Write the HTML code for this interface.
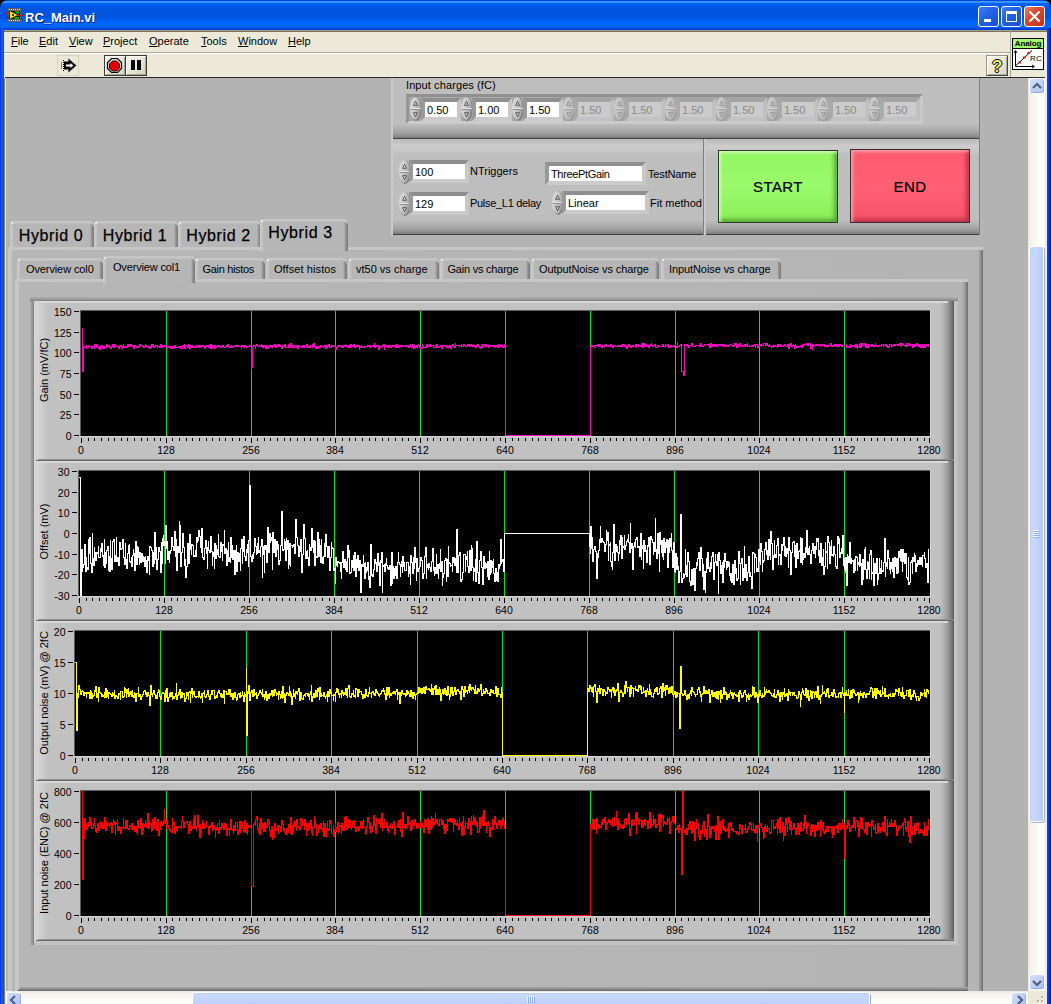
<!DOCTYPE html><html><head><meta charset="utf-8"><title>RC_Main.vi</title><style>
*{box-sizing:border-box;margin:0;padding:0}
html,body{width:1051px;height:1004px;overflow:hidden;background:#b3b3b3}
body{position:relative;font-family:"Liberation Sans","DejaVu Sans",sans-serif;font-size:11px;color:#000}
.a{position:absolute}
.t{position:absolute;white-space:nowrap;line-height:1}
#title{left:0;top:0;width:1051px;height:30px;background:linear-gradient(#0046e0 0,#0046e0 .8px,#3c96ff 1.2px,#3c96ff 2.4px,#0068ff 3.4px,#0059e6 6px,#0055e0 8px,#0055e0 17px,#0062f8 21px,#0068ff 23px,#0068ff 27px,#004ae2 28.5px,#0030d0 30px);border-radius:8px 8px 0 0}
#lb{left:0;top:28px;width:4px;height:976px;background:linear-gradient(90deg,#0831d9,#0b44e6 1px,#1660f0 2px,#0855dd 3px,#0849c7)}
#rb{left:1047px;top:28px;width:4px;height:976px;background:linear-gradient(90deg,#0c48e2,#0837d8 2px,#0020ae 3px,#00138c 4px)}
.wb{position:absolute;top:6px;width:21px;height:21px;border:1px solid #fff;border-radius:3px}
#menu{left:4px;top:30px;width:1043px;height:48px;background:#ece9d8}
.mi{position:absolute;top:35px;font-size:11px;line-height:13px;white-space:nowrap}
.mi u{text-decoration:underline}
.raised{background:#b3b3b3;box-shadow:inset 1px 1px 0 #d0d0d0,inset -1px -1px 0 #6e6e6e}
.num{position:absolute;background:#fff;height:23px;font-size:11px;line-height:17px;padding-left:2px;border-style:solid;border-width:4px;border-color:#8f8f8f #c7c7c7 #cbcbcb #999;white-space:nowrap;overflow:hidden;box-sizing:border-box}
.num.dis{background:#cbcbcb;color:#8a8a8a;border-color:#a4a4a4 #c0c0c0 #c2c2c2 #aaa}
.spin{position:absolute;width:11px;height:23px;border-radius:5.5px/9px;background:linear-gradient(100deg,#dcdcdc,#cdcdcd 40%,#bdbdbd 75%,#9e9e9e);box-shadow:1px 1px 0 0 #777,-1px -1px 0 0 #c4c4c4}
.spin:before{content:"";position:absolute;left:0;right:0;top:10px;height:2px;background:linear-gradient(#e2e2e2 50%,#9a9a9a 50%)}
.spin i{position:absolute;left:3px;width:5px;height:5px}
.spin i.u{top:4px;background:linear-gradient(to top right,transparent 42%,#333 42%,#333 58%,transparent 58%)}
.spin i.d{top:14px;background:linear-gradient(to bottom right,transparent 42%,#333 42%,#333 58%,transparent 58%)}
.spin.dis{opacity:.6}
.tab{position:absolute;background:linear-gradient(90deg,#cbcbcb 0,#c6c6c6 2px,#bcbcbc 3px,#b6b6b6 4px,#b6b6b6 calc(100% - 4px),#a2a2a2 calc(100% - 3px),#8e8e8e calc(100% - 2px),#787878 100%);border-radius:4px 4px 0 0;box-shadow:inset 0 2px 0 #c6c6c6,inset 0 3px 0 #bdbdbd;white-space:nowrap;text-align:center}
.tab:before{content:"";position:absolute;left:1px;top:1px;width:2px;height:2px;background:#f4f4f4;border-radius:1px}
.tab.sel{}
svg text{font-family:"Liberation Sans","DejaVu Sans",sans-serif;font-size:10.5px;fill:#000}
</style></head><body>
<div class="a" style="left:5px;top:78px;width:1023px;height:913px;background:#b3b3b3"></div>
<div class="a" style="left:391px;top:60px;width:589px;height:79px;background:linear-gradient(#bebebe 0,#bebebe 64px,#a6a6a6 72px,#8e8e8e 76px,#7a7a7a 78px,#404040 78px,#404040 79px);box-shadow:inset 2px 0 0 #cacaca,inset -1px 0 0 #808080"></div>
<div class="t" style="left:406px;top:80px;font-size:11px;letter-spacing:.1px">Input charges (fC)</div>
<div class="a" style="left:406px;top:94px;width:517px;height:30px;border-style:solid;border-width:3px;border-color:#909090 #c9c9c9 #cbcbcb #969696;background:#a8a8a8"></div>
<svg class="a" style="left:409px;top:96px" width="14" height="26" viewBox="-1 -1 14 26"><defs><linearGradient id="sg410_97" x1="0" y1="0" x2="1" y2="0.4"><stop offset="0" stop-color="#dedede"/><stop offset=".45" stop-color="#cecece"/><stop offset=".8" stop-color="#b4b4b4"/><stop offset="1" stop-color="#9a9a9a"/></linearGradient></defs><ellipse cx="6" cy="12" rx="5.7" ry="11.7" fill="#6f6f6f"/><ellipse cx="5.4" cy="11.4" rx="5.5" ry="11.5" fill="url(#sg410_97)"/><path d="M0.3 11.5h10.6" stroke="#e6e6e6" stroke-width="1"/><path d="M0.5 12.5h10.6" stroke="#8e8e8e" stroke-width="1"/><path d="M3.6 8.3L5.5 4.3L7.4 8.3Z" fill="#ddd" stroke="#3a3a3a" stroke-width=".8"/><path d="M3.6 15.7L5.5 19.7L7.4 15.7Z" fill="#ddd" stroke="#3a3a3a" stroke-width=".8"/></svg>
<div class="num" style="left:421px;top:98px;width:40px">0.50</div>
<svg class="a" style="left:460px;top:96px" width="14" height="26" viewBox="-1 -1 14 26"><defs><linearGradient id="sg461_97" x1="0" y1="0" x2="1" y2="0.4"><stop offset="0" stop-color="#dedede"/><stop offset=".45" stop-color="#cecece"/><stop offset=".8" stop-color="#b4b4b4"/><stop offset="1" stop-color="#9a9a9a"/></linearGradient></defs><ellipse cx="6" cy="12" rx="5.7" ry="11.7" fill="#6f6f6f"/><ellipse cx="5.4" cy="11.4" rx="5.5" ry="11.5" fill="url(#sg461_97)"/><path d="M0.3 11.5h10.6" stroke="#e6e6e6" stroke-width="1"/><path d="M0.5 12.5h10.6" stroke="#8e8e8e" stroke-width="1"/><path d="M3.6 8.3L5.5 4.3L7.4 8.3Z" fill="#ddd" stroke="#3a3a3a" stroke-width=".8"/><path d="M3.6 15.7L5.5 19.7L7.4 15.7Z" fill="#ddd" stroke="#3a3a3a" stroke-width=".8"/></svg>
<div class="num" style="left:472px;top:98px;width:40px">1.00</div>
<svg class="a" style="left:511px;top:96px" width="14" height="26" viewBox="-1 -1 14 26"><defs><linearGradient id="sg512_97" x1="0" y1="0" x2="1" y2="0.4"><stop offset="0" stop-color="#dedede"/><stop offset=".45" stop-color="#cecece"/><stop offset=".8" stop-color="#b4b4b4"/><stop offset="1" stop-color="#9a9a9a"/></linearGradient></defs><ellipse cx="6" cy="12" rx="5.7" ry="11.7" fill="#6f6f6f"/><ellipse cx="5.4" cy="11.4" rx="5.5" ry="11.5" fill="url(#sg512_97)"/><path d="M0.3 11.5h10.6" stroke="#e6e6e6" stroke-width="1"/><path d="M0.5 12.5h10.6" stroke="#8e8e8e" stroke-width="1"/><path d="M3.6 8.3L5.5 4.3L7.4 8.3Z" fill="#ddd" stroke="#3a3a3a" stroke-width=".8"/><path d="M3.6 15.7L5.5 19.7L7.4 15.7Z" fill="#ddd" stroke="#3a3a3a" stroke-width=".8"/></svg>
<div class="num" style="left:523px;top:98px;width:40px">1.50</div>
<svg class="a" style="left:562px;top:96px" width="14" height="26" viewBox="-1 -1 14 26"><defs><linearGradient id="sg563_97" x1="0" y1="0" x2="1" y2="0.4"><stop offset="0" stop-color="#d0d0d0"/><stop offset=".45" stop-color="#c6c6c6"/><stop offset=".8" stop-color="#b8b8b8"/><stop offset="1" stop-color="#acacac"/></linearGradient></defs><ellipse cx="6" cy="12" rx="5.7" ry="11.7" fill="#989898"/><ellipse cx="5.4" cy="11.4" rx="5.5" ry="11.5" fill="url(#sg563_97)"/><path d="M0.3 11.5h10.6" stroke="#d6d6d6" stroke-width="1"/><path d="M0.5 12.5h10.6" stroke="#a4a4a4" stroke-width="1"/><path d="M3.6 8.3L5.5 4.3L7.4 8.3Z" fill="#cdcdcd" stroke="#8a8a8a" stroke-width=".8"/><path d="M3.6 15.7L5.5 19.7L7.4 15.7Z" fill="#cdcdcd" stroke="#8a8a8a" stroke-width=".8"/></svg>
<div class="num dis" style="left:574px;top:98px;width:40px">1.50</div>
<svg class="a" style="left:613px;top:96px" width="14" height="26" viewBox="-1 -1 14 26"><defs><linearGradient id="sg614_97" x1="0" y1="0" x2="1" y2="0.4"><stop offset="0" stop-color="#d0d0d0"/><stop offset=".45" stop-color="#c6c6c6"/><stop offset=".8" stop-color="#b8b8b8"/><stop offset="1" stop-color="#acacac"/></linearGradient></defs><ellipse cx="6" cy="12" rx="5.7" ry="11.7" fill="#989898"/><ellipse cx="5.4" cy="11.4" rx="5.5" ry="11.5" fill="url(#sg614_97)"/><path d="M0.3 11.5h10.6" stroke="#d6d6d6" stroke-width="1"/><path d="M0.5 12.5h10.6" stroke="#a4a4a4" stroke-width="1"/><path d="M3.6 8.3L5.5 4.3L7.4 8.3Z" fill="#cdcdcd" stroke="#8a8a8a" stroke-width=".8"/><path d="M3.6 15.7L5.5 19.7L7.4 15.7Z" fill="#cdcdcd" stroke="#8a8a8a" stroke-width=".8"/></svg>
<div class="num dis" style="left:625px;top:98px;width:40px">1.50</div>
<svg class="a" style="left:664px;top:96px" width="14" height="26" viewBox="-1 -1 14 26"><defs><linearGradient id="sg665_97" x1="0" y1="0" x2="1" y2="0.4"><stop offset="0" stop-color="#d0d0d0"/><stop offset=".45" stop-color="#c6c6c6"/><stop offset=".8" stop-color="#b8b8b8"/><stop offset="1" stop-color="#acacac"/></linearGradient></defs><ellipse cx="6" cy="12" rx="5.7" ry="11.7" fill="#989898"/><ellipse cx="5.4" cy="11.4" rx="5.5" ry="11.5" fill="url(#sg665_97)"/><path d="M0.3 11.5h10.6" stroke="#d6d6d6" stroke-width="1"/><path d="M0.5 12.5h10.6" stroke="#a4a4a4" stroke-width="1"/><path d="M3.6 8.3L5.5 4.3L7.4 8.3Z" fill="#cdcdcd" stroke="#8a8a8a" stroke-width=".8"/><path d="M3.6 15.7L5.5 19.7L7.4 15.7Z" fill="#cdcdcd" stroke="#8a8a8a" stroke-width=".8"/></svg>
<div class="num dis" style="left:676px;top:98px;width:40px">1.50</div>
<svg class="a" style="left:715px;top:96px" width="14" height="26" viewBox="-1 -1 14 26"><defs><linearGradient id="sg716_97" x1="0" y1="0" x2="1" y2="0.4"><stop offset="0" stop-color="#d0d0d0"/><stop offset=".45" stop-color="#c6c6c6"/><stop offset=".8" stop-color="#b8b8b8"/><stop offset="1" stop-color="#acacac"/></linearGradient></defs><ellipse cx="6" cy="12" rx="5.7" ry="11.7" fill="#989898"/><ellipse cx="5.4" cy="11.4" rx="5.5" ry="11.5" fill="url(#sg716_97)"/><path d="M0.3 11.5h10.6" stroke="#d6d6d6" stroke-width="1"/><path d="M0.5 12.5h10.6" stroke="#a4a4a4" stroke-width="1"/><path d="M3.6 8.3L5.5 4.3L7.4 8.3Z" fill="#cdcdcd" stroke="#8a8a8a" stroke-width=".8"/><path d="M3.6 15.7L5.5 19.7L7.4 15.7Z" fill="#cdcdcd" stroke="#8a8a8a" stroke-width=".8"/></svg>
<div class="num dis" style="left:727px;top:98px;width:40px">1.50</div>
<svg class="a" style="left:766px;top:96px" width="14" height="26" viewBox="-1 -1 14 26"><defs><linearGradient id="sg767_97" x1="0" y1="0" x2="1" y2="0.4"><stop offset="0" stop-color="#d0d0d0"/><stop offset=".45" stop-color="#c6c6c6"/><stop offset=".8" stop-color="#b8b8b8"/><stop offset="1" stop-color="#acacac"/></linearGradient></defs><ellipse cx="6" cy="12" rx="5.7" ry="11.7" fill="#989898"/><ellipse cx="5.4" cy="11.4" rx="5.5" ry="11.5" fill="url(#sg767_97)"/><path d="M0.3 11.5h10.6" stroke="#d6d6d6" stroke-width="1"/><path d="M0.5 12.5h10.6" stroke="#a4a4a4" stroke-width="1"/><path d="M3.6 8.3L5.5 4.3L7.4 8.3Z" fill="#cdcdcd" stroke="#8a8a8a" stroke-width=".8"/><path d="M3.6 15.7L5.5 19.7L7.4 15.7Z" fill="#cdcdcd" stroke="#8a8a8a" stroke-width=".8"/></svg>
<div class="num dis" style="left:778px;top:98px;width:40px">1.50</div>
<svg class="a" style="left:817px;top:96px" width="14" height="26" viewBox="-1 -1 14 26"><defs><linearGradient id="sg818_97" x1="0" y1="0" x2="1" y2="0.4"><stop offset="0" stop-color="#d0d0d0"/><stop offset=".45" stop-color="#c6c6c6"/><stop offset=".8" stop-color="#b8b8b8"/><stop offset="1" stop-color="#acacac"/></linearGradient></defs><ellipse cx="6" cy="12" rx="5.7" ry="11.7" fill="#989898"/><ellipse cx="5.4" cy="11.4" rx="5.5" ry="11.5" fill="url(#sg818_97)"/><path d="M0.3 11.5h10.6" stroke="#d6d6d6" stroke-width="1"/><path d="M0.5 12.5h10.6" stroke="#a4a4a4" stroke-width="1"/><path d="M3.6 8.3L5.5 4.3L7.4 8.3Z" fill="#cdcdcd" stroke="#8a8a8a" stroke-width=".8"/><path d="M3.6 15.7L5.5 19.7L7.4 15.7Z" fill="#cdcdcd" stroke="#8a8a8a" stroke-width=".8"/></svg>
<div class="num dis" style="left:829px;top:98px;width:40px">1.50</div>
<svg class="a" style="left:868px;top:96px" width="14" height="26" viewBox="-1 -1 14 26"><defs><linearGradient id="sg869_97" x1="0" y1="0" x2="1" y2="0.4"><stop offset="0" stop-color="#d0d0d0"/><stop offset=".45" stop-color="#c6c6c6"/><stop offset=".8" stop-color="#b8b8b8"/><stop offset="1" stop-color="#acacac"/></linearGradient></defs><ellipse cx="6" cy="12" rx="5.7" ry="11.7" fill="#989898"/><ellipse cx="5.4" cy="11.4" rx="5.5" ry="11.5" fill="url(#sg869_97)"/><path d="M0.3 11.5h10.6" stroke="#d6d6d6" stroke-width="1"/><path d="M0.5 12.5h10.6" stroke="#a4a4a4" stroke-width="1"/><path d="M3.6 8.3L5.5 4.3L7.4 8.3Z" fill="#cdcdcd" stroke="#8a8a8a" stroke-width=".8"/><path d="M3.6 15.7L5.5 19.7L7.4 15.7Z" fill="#cdcdcd" stroke="#8a8a8a" stroke-width=".8"/></svg>
<div class="num dis" style="left:880px;top:98px;width:40px">1.50</div>
<div class="a" style="left:391px;top:139px;width:313px;height:96px;background:linear-gradient(#b9b9b9 0,#cdcdcd 7px,#bebebe 17px,#bebebe 81px,#a6a6a6 89px,#8e8e8e 93px,#7a7a7a 95px,#404040 95px,#404040 96px);box-shadow:inset 2px 0 0 #cacaca,inset -1px 0 0 #808080"></div>
<div class="a" style="left:704px;top:139px;width:276px;height:96px;background:linear-gradient(#b9b9b9 0,#cdcdcd 7px,#bebebe 17px,#bebebe 81px,#a6a6a6 89px,#8e8e8e 93px,#7a7a7a 95px,#404040 95px,#404040 96px);box-shadow:inset 2px 0 0 #cacaca,inset -1px 0 0 #808080"></div>
<svg class="a" style="left:398px;top:159px" width="14" height="26" viewBox="-1 -1 14 26"><defs><linearGradient id="sg399_160" x1="0" y1="0" x2="1" y2="0.4"><stop offset="0" stop-color="#dedede"/><stop offset=".45" stop-color="#cecece"/><stop offset=".8" stop-color="#b4b4b4"/><stop offset="1" stop-color="#9a9a9a"/></linearGradient></defs><ellipse cx="6" cy="12" rx="5.7" ry="11.7" fill="#6f6f6f"/><ellipse cx="5.4" cy="11.4" rx="5.5" ry="11.5" fill="url(#sg399_160)"/><path d="M0.3 11.5h10.6" stroke="#e6e6e6" stroke-width="1"/><path d="M0.5 12.5h10.6" stroke="#8e8e8e" stroke-width="1"/><path d="M3.6 8.3L5.5 4.3L7.4 8.3Z" fill="#ddd" stroke="#3a3a3a" stroke-width=".8"/><path d="M3.6 15.7L5.5 19.7L7.4 15.7Z" fill="#ddd" stroke="#3a3a3a" stroke-width=".8"/></svg>
<div class="num" style="left:409px;top:160px;width:60px">100</div>
<div class="t" style="left:470px;top:166px">NTriggers</div>
<svg class="a" style="left:398px;top:191px" width="14" height="26" viewBox="-1 -1 14 26"><defs><linearGradient id="sg399_192" x1="0" y1="0" x2="1" y2="0.4"><stop offset="0" stop-color="#dedede"/><stop offset=".45" stop-color="#cecece"/><stop offset=".8" stop-color="#b4b4b4"/><stop offset="1" stop-color="#9a9a9a"/></linearGradient></defs><ellipse cx="6" cy="12" rx="5.7" ry="11.7" fill="#6f6f6f"/><ellipse cx="5.4" cy="11.4" rx="5.5" ry="11.5" fill="url(#sg399_192)"/><path d="M0.3 11.5h10.6" stroke="#e6e6e6" stroke-width="1"/><path d="M0.5 12.5h10.6" stroke="#8e8e8e" stroke-width="1"/><path d="M3.6 8.3L5.5 4.3L7.4 8.3Z" fill="#ddd" stroke="#3a3a3a" stroke-width=".8"/><path d="M3.6 15.7L5.5 19.7L7.4 15.7Z" fill="#ddd" stroke="#3a3a3a" stroke-width=".8"/></svg>
<div class="num" style="left:409px;top:192px;width:60px">129</div>
<div class="t" style="left:470px;top:198px;letter-spacing:-.3px">Pulse_L1 delay</div>
<div class="num" style="left:545px;top:162px;width:101px"><span style="letter-spacing:-.35px">ThreePtGain</span></div>
<div class="t" style="left:648px;top:169px;letter-spacing:-.15px">TestName</div>
<svg class="a" style="left:551px;top:190px" width="14" height="26" viewBox="-1 -1 14 26"><defs><linearGradient id="sg552_191" x1="0" y1="0" x2="1" y2="0.4"><stop offset="0" stop-color="#dedede"/><stop offset=".45" stop-color="#cecece"/><stop offset=".8" stop-color="#b4b4b4"/><stop offset="1" stop-color="#9a9a9a"/></linearGradient></defs><ellipse cx="6" cy="12" rx="5.7" ry="11.7" fill="#6f6f6f"/><ellipse cx="5.4" cy="11.4" rx="5.5" ry="11.5" fill="url(#sg552_191)"/><path d="M0.3 11.5h10.6" stroke="#e6e6e6" stroke-width="1"/><path d="M0.5 12.5h10.6" stroke="#8e8e8e" stroke-width="1"/><path d="M3.6 8.3L5.5 4.3L7.4 8.3Z" fill="#ddd" stroke="#3a3a3a" stroke-width=".8"/><path d="M3.6 15.7L5.5 19.7L7.4 15.7Z" fill="#ddd" stroke="#3a3a3a" stroke-width=".8"/></svg>
<div class="num" style="left:562px;top:191px;width:87px">Linear</div>
<div class="t" style="left:650px;top:198px">Fit method</div>
<div class="a" style="left:718px;top:150px;width:120px;height:73px;background:linear-gradient(#93f562,#9bfa6b 50%,#8bee5a);border:1px solid #30382c;box-shadow:inset 2px 2px 3px rgba(220,255,200,.8),inset -3px -3px 4px rgba(40,110,20,.55);text-align:center;line-height:72px;font-size:15px;-webkit-text-stroke:.2px #000;letter-spacing:.4px">START</div>
<div class="a" style="left:850px;top:149px;width:120px;height:74px;background:linear-gradient(#ff5a6e,#ff6074 50%,#f5526a);border:1px solid #3a2c2e;box-shadow:inset 2px 2px 3px rgba(255,170,180,.8),inset -3px -3px 4px rgba(140,20,40,.55);text-align:center;line-height:74px;font-size:15px;-webkit-text-stroke:.2px #000;letter-spacing:.4px">END</div>
<div class="tab" style="left:10px;top:221px;width:84px;height:27px;font-size:16px;line-height:29px;letter-spacing:.6px;-webkit-text-stroke:.25px #000;padding-right:2px">Hybrid 0</div>
<div class="tab" style="left:94px;top:221px;width:84px;height:27px;font-size:16px;line-height:29px;letter-spacing:.6px;-webkit-text-stroke:.25px #000;padding-right:2px">Hybrid 1</div>
<div class="tab" style="left:178px;top:221px;width:83px;height:27px;font-size:16px;line-height:29px;letter-spacing:.6px;-webkit-text-stroke:.25px #000;padding-right:2px">Hybrid 2</div>
<div class="a" style="left:8px;top:247px;width:975px;height:760px;background:linear-gradient(90deg,#c8c8c8 0,#c6c6c6 3.6px,#b6b6b6 4.4px,#b4b4b4 calc(100% - 5px),#9a9a9a calc(100% - 3px),#6c6c6c 100%);box-shadow:inset 0 3px 0 #c6c6c6"></div>
<div class="tab sel" style="left:260px;top:219px;width:88px;height:32px;font-size:16px;line-height:28px;letter-spacing:.6px;-webkit-text-stroke:.25px #000;padding-right:7px">Hybrid 3</div>
<div class="tab" style="left:17px;top:258px;width:86px;height:22px;line-height:22px;text-align:left;padding-left:9.0px;letter-spacing:-0.11px">Overview col0</div>
<div class="tab" style="left:195px;top:258px;width:70px;height:22px;line-height:22px;text-align:left;padding-left:7.5px;letter-spacing:-0.32px">Gain histos</div>
<div class="tab" style="left:266px;top:258px;width:81px;height:22px;line-height:22px;text-align:left;padding-left:7.9px;letter-spacing:0.1px">Offset histos</div>
<div class="tab" style="left:348px;top:258px;width:91px;height:22px;line-height:22px;text-align:left;padding-left:8.0px;letter-spacing:0px">vt50 vs charge</div>
<div class="tab" style="left:440px;top:258px;width:90px;height:22px;line-height:22px;text-align:left;padding-left:7.4px;letter-spacing:-0.21px">Gain vs charge</div>
<div class="tab" style="left:531px;top:258px;width:128px;height:22px;line-height:22px;text-align:left;padding-left:8.0px;letter-spacing:-0.1px">OutputNoise vs charge</div>
<div class="tab" style="left:661px;top:258px;width:120px;height:22px;line-height:22px;text-align:left;padding-left:8.0px;letter-spacing:-0.09px">InputNoise vs charge</div>
<div class="a" style="left:15px;top:279px;width:953px;height:712px;background:linear-gradient(90deg,#c8c8c8 0,#c6c6c6 3.6px,#b6b6b6 4.4px,#b4b4b4 calc(100% - 6px),#9a9a9a calc(100% - 3px),#6c6c6c 100%);box-shadow:inset 0 3px 0 #c6c6c6"></div>
<div class="a" style="left:17px;top:987px;width:951px;height:4px;background:linear-gradient(#a8a8a8,#8c8c8c 50%,#666);clip-path:polygon(4px 0,100% 0,100% 100%,0 100%)"></div>
<div class="tab sel" style="left:103px;top:256px;width:92px;height:27px;line-height:22px;letter-spacing:-.15px;padding-right:5px">Overview col1</div>
<div class="a" style="left:30px;top:297px;width:928px;height:648px;background:linear-gradient(#b0b0b0,#9c9c9c 50%,#808080) 0 0/100% 4px no-repeat,linear-gradient(90deg,#b0b0b0,#9c9c9c 50%,#808080) 0 0/4px 100% no-repeat,linear-gradient(#c6c6c6,#c0c0c0) 0 100%/100% 4px no-repeat,linear-gradient(90deg,#c8c8c8,#bebebe) 100% 0/4px 100% no-repeat,#b3b3b3"></div>
<svg class="a" style="left:34px;top:301px" width="920" height="160" viewBox="34 301 920 160" shape-rendering="crispEdges">
<defs><linearGradient id="g301" x1="0" x2="1"><stop offset="0" stop-color="#d6d6d6"/><stop offset="0.008" stop-color="#cfcfcf"/><stop offset="0.015" stop-color="#c1c1c1"/><stop offset="0.985" stop-color="#c1c1c1"/><stop offset="0.993" stop-color="#9c9c9c"/><stop offset="0.999" stop-color="#6a6a6a"/><stop offset="1" stop-color="#4c4c4c"/></linearGradient></defs>
<rect x="34" y="301" width="920" height="160" fill="url(#g301)"/>
<rect x="34" y="301" width="914" height="2" fill="#d8d8d8"/><rect x="38" y="459" width="916" height="1" fill="#909090"/><rect x="36" y="460" width="918" height="1" fill="#6a6a6a"/>
<rect x="80" y="310" width="851" height="127" fill="#d2d2d2"/>
<rect x="80" y="310" width="850" height="126" fill="#5c5c5c"/>
<rect x="81" y="311" width="849" height="125" fill="#000"/>
<rect x="166" y="311" width="1" height="125" fill="#00ee00"/>
<rect x="251" y="311" width="1" height="125" fill="#00ee00"/>
<rect x="335" y="311" width="1" height="125" fill="#00ee00"/>
<rect x="420" y="311" width="1" height="125" fill="#00ee00"/>
<rect x="505" y="311" width="1" height="125" fill="#00ee00"/>
<rect x="590" y="311" width="1" height="125" fill="#00ee00"/>
<rect x="675" y="311" width="1" height="125" fill="#00ee00"/>
<rect x="759" y="311" width="1" height="125" fill="#00ee00"/>
<rect x="844" y="311" width="1" height="125" fill="#00ee00"/>
<path d="M82 328v44M83 346v26M84 346v2M85 346v1M86 345v4M87 345v1M88 345v3M89 346v1M90 346v1M91 346v3M92 346v3M93 346v1M94 344v5M95 344v3M96 344v4M97 344v3M98 346v3M99 347v3M100 345v5M101 347v1M102 345v4M103 346v3M104 346v3M105 347v1M106 344v4M107 344v3M108 345v2M109 345v3M110 347v2M111 346v3M112 344v3M113 344v4M114 344v4M115 344v3M116 346v1M117 346v1M118 346v3M119 346v3M120 345v2M121 345v4M122 346v3M123 344v3M124 346v2M125 347v1M126 346v2M127 344v4M128 344v3M129 345v2M130 344v2M131 344v3M132 345v2M133 345v4M134 345v4M135 345v2M136 346v2M137 346v2M138 346v2M139 344v3M140 344v2M141 345v1M142 345v2M143 346v2M144 346v2M145 344v3M146 345v2M147 346v2M148 346v2M149 346v3M150 346v3M151 344v4M152 344v3M153 344v4M154 346v2M155 345v2M156 345v1M157 345v3M158 346v1M159 346v2M160 344v4M161 344v4M162 345v3M163 346v1M164 345v2M165 345v2M166 345v2M167 346v2M168 346v2M169 346v2M170 346v3M171 346v3M172 346v3M173 346v3M174 345v3M175 345v3M176 347v1M177 347v1M178 346v2M179 346v2M180 346v3M181 346v3M182 345v4M183 345v1M184 344v5M185 345v4M186 345v1M187 345v3M188 344v4M189 344v5M190 345v4M191 345v3M192 345v3M193 347v1M194 346v2M195 346v1M196 345v3M197 346v2M198 345v2M199 345v3M200 345v3M201 346v1M202 345v2M203 345v2M204 346v3M205 345v3M206 345v2M207 345v2M208 345v3M209 345v3M210 344v5M211 344v5M212 345v4M213 345v2M214 345v4M215 345v3M216 346v2M217 345v2M218 345v2M219 345v2M220 346v2M221 345v3M222 345v2M223 345v3M224 347v1M225 346v2M226 345v2M227 344v3M228 344v3M229 346v2M230 346v2M231 345v3M232 346v2M233 345v2M234 346v1M235 345v2M236 345v2M237 345v1M238 345v2M239 346v1M240 346v1M241 345v4M242 345v2M243 345v3M244 345v3M245 345v3M246 346v2M247 346v2M248 346v1M249 345v2M250 345v2M251 345v25M252 346v22M253 345v2M254 345v1M255 345v4M256 344v2M257 344v3M258 346v1M259 345v2M260 345v2M261 344v3M262 345v3M263 345v3M264 345v2M265 346v3M266 345v4M267 345v4M268 346v3M269 345v2M270 345v2M271 345v3M272 345v3M273 345v1M274 344v3M275 344v4M276 345v3M277 344v2M278 344v3M279 344v3M280 345v2M281 346v3M282 345v4M283 345v2M284 344v3M285 344v4M286 347v1M287 347v1M288 344v4M289 345v3M290 343v5M291 343v4M292 345v3M293 345v1M294 345v3M295 347v1M296 345v3M297 346v3M298 345v4M299 345v2M300 346v1M301 346v2M302 345v3M303 345v3M304 345v3M305 346v2M306 344v3M307 344v4M308 346v2M309 346v2M310 345v3M311 345v1M312 344v4M313 343v5M314 343v4M315 346v3M316 346v3M317 346v3M318 346v3M319 346v2M320 345v3M321 345v2M322 346v1M323 346v2M324 345v2M325 345v4M326 345v4M327 345v3M328 344v3M329 344v4M330 347v1M331 345v3M332 345v2M333 345v2M334 346v1M335 346v4M336 347v3M337 346v2M338 345v2M339 345v2M340 345v2M341 345v3M342 346v2M343 345v3M344 345v2M345 344v2M346 345v2M347 345v3M348 345v3M349 345v3M350 344v4M351 344v3M352 345v2M353 344v3M354 344v4M355 346v2M356 345v2M357 345v2M358 345v2M359 345v5M360 346v2M361 345v3M362 347v1M363 346v2M364 346v2M365 346v1M366 346v1M367 345v2M368 345v2M369 345v3M370 345v3M371 345v1M372 345v2M373 345v2M374 343v5M375 345v3M376 345v2M377 345v1M378 345v5M379 346v4M380 346v2M381 346v1M382 345v2M383 344v2M384 344v6M385 345v2M386 345v2M387 346v2M388 345v3M389 345v1M390 345v3M391 346v2M392 345v2M393 345v2M394 345v2M395 345v3M396 344v4M397 344v4M398 345v3M399 345v3M400 345v2M401 345v2M402 345v2M403 346v1M404 346v1M405 345v2M406 345v2M407 345v1M408 345v3M409 345v3M410 344v3M411 346v2M412 344v4M413 344v5M414 345v4M415 346v2M416 345v3M417 345v3M418 344v2M419 345v3M420 347v2M421 347v2M422 344v5M423 346v2M424 347v1M425 346v2M426 344v4M427 344v3M428 345v2M429 344v2M430 344v3M431 345v2M432 345v1M433 345v3M434 347v1M435 345v3M436 344v4M437 344v4M438 346v2M439 346v1M440 345v2M441 345v4M442 345v4M443 345v2M444 345v1M445 345v2M446 345v3M447 346v2M448 346v2M449 345v3M450 345v4M451 345v4M452 344v2M453 344v3M454 346v2M455 343v5M456 345v1M457 345v1M458 345v1M459 345v2M460 345v1M461 344v3M462 346v1M463 344v3M464 344v2M465 345v2M466 346v1M467 344v3M468 344v2M469 344v3M470 344v3M471 344v2M472 345v2M473 344v3M474 345v2M475 345v3M476 345v3M477 344v2M478 344v3M479 346v2M480 347v2M481 345v3M482 344v4M483 344v1M484 344v3M485 344v2M486 344v3M487 345v2M488 345v3M489 345v2M490 345v2M491 345v1M492 345v2M493 345v1M494 345v3M495 345v1M496 345v2M497 345v3M498 344v4M499 346v1M500 344v3M501 345v2M502 345v3M503 346v2M504 344v4M505 344v92M506 435v1M507 435v1M508 435v1M509 435v1M510 435v1M511 435v1M512 435v1M513 435v1M514 435v1M515 435v1M516 435v1M517 435v1M518 435v1M519 435v1M520 435v1M521 435v1M522 435v1M523 435v1M524 435v1M525 435v1M526 435v1M527 435v1M528 435v1M529 435v1M530 435v1M531 435v1M532 435v1M533 435v1M534 435v1M535 435v1M536 435v1M537 435v1M538 435v1M539 435v1M540 435v1M541 435v1M542 435v1M543 435v1M544 435v1M545 435v1M546 435v1M547 435v1M548 435v1M549 435v1M550 435v1M551 435v1M552 435v1M553 435v1M554 435v1M555 435v1M556 435v1M557 435v1M558 435v1M559 435v1M560 435v1M561 435v1M562 435v1M563 435v1M564 435v1M565 435v1M566 435v1M567 435v1M568 435v1M569 435v1M570 435v1M571 435v1M572 435v1M573 435v1M574 435v1M575 435v1M576 435v1M577 435v1M578 435v1M579 435v1M580 435v1M581 435v1M582 435v1M583 435v1M584 435v1M585 435v1M586 435v1M587 435v1M588 435v1M589 435v1M590 346v90M591 345v3M592 345v2M593 345v1M594 345v3M595 345v1M596 345v1M597 344v2M598 344v3M599 344v3M600 344v3M601 346v2M602 345v3M603 346v1M604 345v2M605 344v2M606 344v3M607 346v1M608 345v2M609 345v1M610 344v3M611 344v2M612 345v3M613 345v3M614 345v1M615 345v2M616 346v1M617 345v2M618 345v2M619 346v1M620 345v2M621 345v2M622 344v3M623 344v1M624 344v3M625 346v2M626 345v4M627 346v3M628 344v3M629 344v2M630 345v3M631 346v2M632 345v2M633 345v2M634 346v1M635 344v3M636 344v4M637 344v2M638 344v3M639 345v2M640 345v2M641 343v3M642 343v5M643 343v5M644 343v4M645 344v3M646 344v3M647 345v2M648 345v3M649 345v3M650 344v2M651 343v3M652 345v2M653 345v2M654 344v2M655 344v4M656 347v1M657 345v3M658 345v2M659 346v1M660 346v1M661 346v1M662 344v3M663 344v3M664 346v1M665 344v3M666 345v1M667 344v2M668 344v4M669 346v2M670 345v3M671 345v2M672 346v1M673 345v2M674 345v2M675 344v3M676 346v2M677 342v6M678 346v1M679 345v2M680 344v2M681 344v28M682 371v1M683 371v5M684 344v32M685 344v2M686 344v2M687 344v3M688 345v3M689 345v3M690 345v1M691 343v3M692 343v4M693 346v1M694 346v1M695 345v2M696 345v1M697 345v1M698 345v1M699 345v2M700 343v4M701 344v3M702 346v1M703 345v2M704 344v2M705 344v1M706 344v1M707 344v1M708 344v2M709 345v3M710 343v5M711 343v4M712 344v3M713 344v2M714 344v3M715 344v2M716 344v3M717 345v2M718 344v2M719 344v1M720 344v2M721 344v2M722 344v3M723 344v2M724 344v3M725 345v2M726 345v2M727 345v1M728 345v2M729 344v2M730 344v1M731 344v2M732 345v2M733 345v2M734 343v3M735 343v2M736 343v5M737 345v3M738 344v3M739 343v2M740 343v4M741 345v1M742 345v2M743 346v1M744 344v3M745 344v3M746 344v2M747 343v4M748 346v1M749 345v2M750 346v1M751 345v2M752 345v2M753 345v2M754 344v2M755 344v4M756 344v1M757 344v4M758 345v3M759 345v2M760 344v2M761 344v3M762 345v1M763 343v3M764 343v1M765 343v3M766 343v3M767 343v3M768 345v2M769 344v3M770 346v1M771 346v2M772 345v2M773 345v3M774 345v2M775 345v2M776 346v1M777 344v4M778 344v3M779 344v3M780 344v3M781 345v2M782 346v1M783 345v2M784 344v2M785 344v3M786 346v1M787 344v3M788 344v5M789 344v5M790 343v3M791 343v4M792 345v2M793 344v2M794 345v4M795 344v5M796 346v2M797 346v2M798 346v2M799 346v1M800 345v2M801 345v3M802 344v4M803 344v1M804 344v2M805 344v1M806 343v2M807 343v3M808 343v3M809 343v1M810 343v6M811 345v4M812 344v6M813 344v2M814 345v1M815 344v2M816 344v2M817 344v1M818 344v2M819 345v1M820 344v3M821 344v1M822 344v2M823 344v1M824 344v3M825 345v2M826 345v2M827 345v2M828 345v2M829 345v1M830 343v3M831 343v4M832 345v2M833 345v2M834 344v2M835 344v3M836 344v3M837 344v2M838 344v3M839 344v3M840 344v2M841 345v2M842 345v2M843 345v1M844 345v1M845 345v1M846 344v4M847 346v2M848 346v2M849 346v2M850 344v4M851 345v2M852 345v2M853 345v1M854 345v2M855 344v4M856 344v4M857 344v5M858 346v1M859 344v4M860 343v5M861 343v5M862 343v3M863 345v1M864 343v3M865 343v5M866 344v4M867 344v4M868 344v4M869 344v3M870 345v1M871 344v3M872 344v3M873 345v2M874 345v2M875 343v3M876 345v2M877 345v2M878 345v2M879 345v1M880 345v1M881 344v3M882 344v1M883 344v3M884 345v1M885 344v2M886 344v3M887 345v3M888 346v2M889 344v3M890 344v1M891 344v3M892 345v2M893 344v2M894 344v2M895 344v2M896 344v1M897 344v2M898 344v2M899 343v3M900 343v3M901 343v4M902 343v2M903 344v2M904 345v1M905 345v2M906 343v4M907 345v1M908 343v3M909 343v2M910 344v2M911 344v2M912 344v4M913 344v4M914 344v3M915 345v2M916 343v3M917 343v3M918 344v3M919 344v3M920 344v4M921 345v3M922 344v4M923 345v3M924 344v4M925 345v3M926 344v2M927 344v3M928 344v3" fill="none" stroke="#ff00c4" stroke-width="1" transform="translate(.5 0)"/>
<rect x="81" y="438" width="1" height="5" fill="#000"/>
<text x="81" y="454" text-anchor="middle">0</text>
<rect x="88" y="438" width="1" height="3" fill="#000"/>
<rect x="94" y="438" width="1" height="3" fill="#000"/>
<rect x="101" y="438" width="1" height="3" fill="#000"/>
<rect x="108" y="438" width="1" height="3" fill="#000"/>
<rect x="114" y="438" width="1" height="3" fill="#000"/>
<rect x="121" y="438" width="1" height="3" fill="#000"/>
<rect x="127" y="438" width="1" height="3" fill="#000"/>
<rect x="134" y="438" width="1" height="3" fill="#000"/>
<rect x="141" y="438" width="1" height="3" fill="#000"/>
<rect x="147" y="438" width="1" height="3" fill="#000"/>
<rect x="154" y="438" width="1" height="3" fill="#000"/>
<rect x="160" y="438" width="1" height="3" fill="#000"/>
<rect x="166" y="438" width="1" height="5" fill="#000"/>
<text x="166" y="454" text-anchor="middle">128</text>
<rect x="172" y="438" width="1" height="3" fill="#000"/>
<rect x="179" y="438" width="1" height="3" fill="#000"/>
<rect x="186" y="438" width="1" height="3" fill="#000"/>
<rect x="192" y="438" width="1" height="3" fill="#000"/>
<rect x="199" y="438" width="1" height="3" fill="#000"/>
<rect x="206" y="438" width="1" height="3" fill="#000"/>
<rect x="212" y="438" width="1" height="3" fill="#000"/>
<rect x="219" y="438" width="1" height="3" fill="#000"/>
<rect x="225" y="438" width="1" height="3" fill="#000"/>
<rect x="232" y="438" width="1" height="3" fill="#000"/>
<rect x="239" y="438" width="1" height="3" fill="#000"/>
<rect x="245" y="438" width="1" height="3" fill="#000"/>
<rect x="251" y="438" width="1" height="5" fill="#000"/>
<text x="251" y="454" text-anchor="middle">256</text>
<rect x="257" y="438" width="1" height="3" fill="#000"/>
<rect x="264" y="438" width="1" height="3" fill="#000"/>
<rect x="270" y="438" width="1" height="3" fill="#000"/>
<rect x="277" y="438" width="1" height="3" fill="#000"/>
<rect x="284" y="438" width="1" height="3" fill="#000"/>
<rect x="290" y="438" width="1" height="3" fill="#000"/>
<rect x="297" y="438" width="1" height="3" fill="#000"/>
<rect x="304" y="438" width="1" height="3" fill="#000"/>
<rect x="310" y="438" width="1" height="3" fill="#000"/>
<rect x="317" y="438" width="1" height="3" fill="#000"/>
<rect x="323" y="438" width="1" height="3" fill="#000"/>
<rect x="330" y="438" width="1" height="3" fill="#000"/>
<rect x="335" y="438" width="1" height="5" fill="#000"/>
<text x="335" y="454" text-anchor="middle">384</text>
<rect x="342" y="438" width="1" height="3" fill="#000"/>
<rect x="349" y="438" width="1" height="3" fill="#000"/>
<rect x="355" y="438" width="1" height="3" fill="#000"/>
<rect x="362" y="438" width="1" height="3" fill="#000"/>
<rect x="369" y="438" width="1" height="3" fill="#000"/>
<rect x="375" y="438" width="1" height="3" fill="#000"/>
<rect x="382" y="438" width="1" height="3" fill="#000"/>
<rect x="388" y="438" width="1" height="3" fill="#000"/>
<rect x="395" y="438" width="1" height="3" fill="#000"/>
<rect x="402" y="438" width="1" height="3" fill="#000"/>
<rect x="408" y="438" width="1" height="3" fill="#000"/>
<rect x="415" y="438" width="1" height="3" fill="#000"/>
<rect x="420" y="438" width="1" height="5" fill="#000"/>
<text x="420" y="454" text-anchor="middle">512</text>
<rect x="427" y="438" width="1" height="3" fill="#000"/>
<rect x="433" y="438" width="1" height="3" fill="#000"/>
<rect x="440" y="438" width="1" height="3" fill="#000"/>
<rect x="447" y="438" width="1" height="3" fill="#000"/>
<rect x="453" y="438" width="1" height="3" fill="#000"/>
<rect x="460" y="438" width="1" height="3" fill="#000"/>
<rect x="467" y="438" width="1" height="3" fill="#000"/>
<rect x="473" y="438" width="1" height="3" fill="#000"/>
<rect x="480" y="438" width="1" height="3" fill="#000"/>
<rect x="486" y="438" width="1" height="3" fill="#000"/>
<rect x="493" y="438" width="1" height="3" fill="#000"/>
<rect x="500" y="438" width="1" height="3" fill="#000"/>
<rect x="505" y="438" width="1" height="5" fill="#000"/>
<text x="505" y="454" text-anchor="middle">640</text>
<rect x="512" y="438" width="1" height="3" fill="#000"/>
<rect x="518" y="438" width="1" height="3" fill="#000"/>
<rect x="525" y="438" width="1" height="3" fill="#000"/>
<rect x="532" y="438" width="1" height="3" fill="#000"/>
<rect x="538" y="438" width="1" height="3" fill="#000"/>
<rect x="545" y="438" width="1" height="3" fill="#000"/>
<rect x="551" y="438" width="1" height="3" fill="#000"/>
<rect x="558" y="438" width="1" height="3" fill="#000"/>
<rect x="565" y="438" width="1" height="3" fill="#000"/>
<rect x="571" y="438" width="1" height="3" fill="#000"/>
<rect x="578" y="438" width="1" height="3" fill="#000"/>
<rect x="584" y="438" width="1" height="3" fill="#000"/>
<rect x="590" y="438" width="1" height="5" fill="#000"/>
<text x="590" y="454" text-anchor="middle">768</text>
<rect x="596" y="438" width="1" height="3" fill="#000"/>
<rect x="603" y="438" width="1" height="3" fill="#000"/>
<rect x="610" y="438" width="1" height="3" fill="#000"/>
<rect x="616" y="438" width="1" height="3" fill="#000"/>
<rect x="623" y="438" width="1" height="3" fill="#000"/>
<rect x="630" y="438" width="1" height="3" fill="#000"/>
<rect x="636" y="438" width="1" height="3" fill="#000"/>
<rect x="643" y="438" width="1" height="3" fill="#000"/>
<rect x="649" y="438" width="1" height="3" fill="#000"/>
<rect x="656" y="438" width="1" height="3" fill="#000"/>
<rect x="663" y="438" width="1" height="3" fill="#000"/>
<rect x="669" y="438" width="1" height="3" fill="#000"/>
<rect x="675" y="438" width="1" height="5" fill="#000"/>
<text x="675" y="454" text-anchor="middle">896</text>
<rect x="681" y="438" width="1" height="3" fill="#000"/>
<rect x="688" y="438" width="1" height="3" fill="#000"/>
<rect x="694" y="438" width="1" height="3" fill="#000"/>
<rect x="701" y="438" width="1" height="3" fill="#000"/>
<rect x="708" y="438" width="1" height="3" fill="#000"/>
<rect x="714" y="438" width="1" height="3" fill="#000"/>
<rect x="721" y="438" width="1" height="3" fill="#000"/>
<rect x="728" y="438" width="1" height="3" fill="#000"/>
<rect x="734" y="438" width="1" height="3" fill="#000"/>
<rect x="741" y="438" width="1" height="3" fill="#000"/>
<rect x="747" y="438" width="1" height="3" fill="#000"/>
<rect x="754" y="438" width="1" height="3" fill="#000"/>
<rect x="759" y="438" width="1" height="5" fill="#000"/>
<text x="759" y="454" text-anchor="middle">1024</text>
<rect x="766" y="438" width="1" height="3" fill="#000"/>
<rect x="773" y="438" width="1" height="3" fill="#000"/>
<rect x="779" y="438" width="1" height="3" fill="#000"/>
<rect x="786" y="438" width="1" height="3" fill="#000"/>
<rect x="793" y="438" width="1" height="3" fill="#000"/>
<rect x="799" y="438" width="1" height="3" fill="#000"/>
<rect x="806" y="438" width="1" height="3" fill="#000"/>
<rect x="812" y="438" width="1" height="3" fill="#000"/>
<rect x="819" y="438" width="1" height="3" fill="#000"/>
<rect x="826" y="438" width="1" height="3" fill="#000"/>
<rect x="832" y="438" width="1" height="3" fill="#000"/>
<rect x="839" y="438" width="1" height="3" fill="#000"/>
<rect x="844" y="438" width="1" height="5" fill="#000"/>
<text x="844" y="454" text-anchor="middle">1152</text>
<rect x="851" y="438" width="1" height="3" fill="#000"/>
<rect x="857" y="438" width="1" height="3" fill="#000"/>
<rect x="864" y="438" width="1" height="3" fill="#000"/>
<rect x="871" y="438" width="1" height="3" fill="#000"/>
<rect x="877" y="438" width="1" height="3" fill="#000"/>
<rect x="884" y="438" width="1" height="3" fill="#000"/>
<rect x="891" y="438" width="1" height="3" fill="#000"/>
<rect x="897" y="438" width="1" height="3" fill="#000"/>
<rect x="904" y="438" width="1" height="3" fill="#000"/>
<rect x="910" y="438" width="1" height="3" fill="#000"/>
<rect x="917" y="438" width="1" height="3" fill="#000"/>
<rect x="924" y="438" width="1" height="3" fill="#000"/>
<rect x="929" y="438" width="1" height="5" fill="#000"/>
<text x="929" y="454" text-anchor="middle">1280</text>
<rect x="74" y="435" width="5" height="1" fill="#000"/>
<text x="71.5" y="439.5" text-anchor="end">0</text>
<rect x="74" y="414" width="5" height="1" fill="#000"/>
<text x="71.5" y="418.5" text-anchor="end">25</text>
<rect x="74" y="394" width="5" height="1" fill="#000"/>
<text x="71.5" y="398.5" text-anchor="end">50</text>
<rect x="74" y="373" width="5" height="1" fill="#000"/>
<text x="71.5" y="377.5" text-anchor="end">75</text>
<rect x="74" y="352" width="5" height="1" fill="#000"/>
<text x="71.5" y="356.5" text-anchor="end">100</text>
<rect x="74" y="332" width="5" height="1" fill="#000"/>
<text x="71.5" y="336.5" text-anchor="end">125</text>
<rect x="74" y="311" width="5" height="1" fill="#000"/>
<text x="71.5" y="315.5" text-anchor="end">150</text>
<text x="48" y="370.0" text-anchor="middle" transform="rotate(-90 48 370.0)" style="font-size:11px">Gain (mV/fC)</text>
</svg>
<svg class="a" style="left:34px;top:461px" width="920" height="160" viewBox="34 461 920 160" shape-rendering="crispEdges">
<defs><linearGradient id="g461" x1="0" x2="1"><stop offset="0" stop-color="#d6d6d6"/><stop offset="0.008" stop-color="#cfcfcf"/><stop offset="0.015" stop-color="#c1c1c1"/><stop offset="0.985" stop-color="#c1c1c1"/><stop offset="0.993" stop-color="#9c9c9c"/><stop offset="0.999" stop-color="#6a6a6a"/><stop offset="1" stop-color="#4c4c4c"/></linearGradient></defs>
<rect x="34" y="461" width="920" height="160" fill="url(#g461)"/>
<rect x="34" y="461" width="914" height="2" fill="#d8d8d8"/><rect x="38" y="619" width="916" height="1" fill="#909090"/><rect x="36" y="620" width="918" height="1" fill="#6a6a6a"/>
<rect x="78" y="470" width="853" height="127" fill="#d2d2d2"/>
<rect x="78" y="470" width="852" height="126" fill="#5c5c5c"/>
<rect x="79" y="471" width="851" height="125" fill="#000"/>
<rect x="164" y="471" width="1" height="125" fill="#00ee00"/>
<rect x="249" y="471" width="1" height="125" fill="#00ee00"/>
<rect x="334" y="471" width="1" height="125" fill="#00ee00"/>
<rect x="419" y="471" width="1" height="125" fill="#00ee00"/>
<rect x="504" y="471" width="1" height="125" fill="#00ee00"/>
<rect x="589" y="471" width="1" height="125" fill="#00ee00"/>
<rect x="674" y="471" width="1" height="125" fill="#00ee00"/>
<rect x="759" y="471" width="1" height="125" fill="#00ee00"/>
<rect x="844" y="471" width="1" height="125" fill="#00ee00"/>
<path d="M79 477v1M80 477v119M81 549v47M82 549v23M83 564v4M84 544v21M85 544v28M86 557v15M87 567v3M88 539v31M89 537v17M90 537v27M91 563v10M92 533v40M93 558v8M94 547v19M95 552v9M96 552v9M97 552v2M98 546v12M99 557v1M100 548v10M101 543v9M102 543v14M103 555v11M104 539v29M105 552v16M106 550v14M107 546v5M108 546v25M109 556v16M110 540v32M111 558v12M112 541v29M113 539v3M114 539v23M115 555v7M116 537v25M117 557v5M118 557v9M119 542v24M120 542v8M121 548v2M122 539v10M123 539v19M124 557v8M125 543v22M126 559v10M127 553v16M128 545v9M129 544v18M130 561v2M131 557v10M132 555v12M133 549v7M134 553v18M135 541v30M136 541v24M137 546v19M138 547v11M139 552v13M140 552v11M141 553v10M142 553v9M143 556v6M144 557v10M145 556v11M146 560v13M147 556v17M148 556v5M149 546v29M150 546v2M151 547v4M152 550v17M153 552v15M154 532v32M155 532v28M156 547v23M157 559v11M158 547v13M159 547v5M160 551v22M161 542v31M162 538v26M163 535v11M164 541v5M165 525v39M166 525v24M167 541v19M168 551v9M169 551v12M170 550v4M171 537v14M172 537v10M173 546v5M174 531v20M175 531v26M176 539v32M177 546v25M178 546v7M179 521v32M180 525v42M181 552v15M182 533v20M183 533v15M184 547v19M185 559v19M186 566v12M187 543v24M188 543v21M189 534v30M190 534v16M191 544v11M192 544v2M193 545v12M194 555v2M195 550v7M196 537v20M197 537v6M198 530v11M199 530v7M200 536v12M201 528v25M202 528v30M203 557v3M204 548v12M205 540v9M206 540v14M207 547v22M208 541v10M209 550v3M210 536v17M211 536v16M212 551v15M213 552v5M214 543v26M215 543v16M216 545v14M217 549v6M218 534v23M219 556v2M220 542v16M221 542v10M222 544v17M223 544v2M224 530v24M225 548v6M226 548v18M227 550v16M228 542v20M229 557v5M230 537v26M231 537v21M232 545v15M233 550v10M234 550v25M235 550v25M236 545v27M237 552v20M238 552v10M239 553v9M240 548v23M241 539v10M242 539v25M243 536v16M244 536v21M245 556v5M246 549v12M247 544v9M248 540v27M249 485v56M250 485v72M251 556v6M252 554v8M253 552v7M254 538v15M255 538v9M256 546v9M257 543v11M258 537v16M259 550v3M260 546v11M261 539v8M262 539v39M263 546v9M264 545v28M265 545v5M266 545v18M267 527v36M268 527v26M269 533v20M270 533v10M271 537v4M272 532v38M273 532v21M274 539v14M275 539v18M276 541v16M277 541v9M278 544v21M279 560v5M280 545v16M281 511v35M282 511v40M283 549v2M284 539v11M285 541v20M286 538v23M287 540v10M288 540v29M289 543v22M290 543v24M291 545v1M292 545v3M293 544v3M294 544v10M295 519v35M296 519v19M297 537v9M298 545v12M299 546v11M300 539v13M301 539v34M302 554v19M303 524v31M304 524v15M305 538v21M306 551v8M307 550v9M308 557v9M309 544v22M310 547v4M311 528v23M312 528v20M313 540v13M314 540v26M315 541v25M316 556v2M317 532v26M318 532v25M319 539v18M320 545v18M321 539v24M322 557v7M323 556v8M324 543v14M325 534v23M326 534v13M327 546v12M328 546v12M329 546v25M330 557v14M331 542v16M332 547v2M333 548v23M334 568v3M335 557v27M336 557v9M337 561v6M338 561v2M339 562v2M340 562v10M341 562v17M342 551v12M343 551v17M344 559v9M345 559v11M346 561v11M347 545v27M348 545v13M349 550v24M350 572v2M351 560v13M352 560v8M353 555v16M354 552v19M355 552v25M356 559v18M357 555v13M358 555v16M359 560v11M360 560v33M361 564v29M362 564v3M363 555v12M364 563v16M365 562v17M366 567v6M367 562v9M368 562v18M369 576v12M370 544v44M371 544v32M372 574v3M373 569v8M374 559v11M375 559v5M376 562v10M377 553v19M378 553v13M379 562v24M380 560v26M381 552v11M382 552v41M383 565v2M384 564v8M385 563v9M386 558v8M387 565v4M388 567v3M389 565v5M390 565v21M391 552v34M392 552v32M393 566v13M394 568v11M395 566v10M396 566v13M397 562v17M398 552v11M399 562v3M400 564v13M401 561v6M402 556v17M403 556v11M404 562v9M405 570v1M406 562v9M407 562v1M408 562v15M409 566v8M410 555v30M411 555v8M412 562v12M413 557v17M414 547v22M415 547v16M416 558v23M417 558v14M418 568v4M419 566v3M420 557v10M421 557v4M422 560v19M423 573v6M424 556v18M425 547v10M426 547v32M427 564v4M428 563v7M429 563v5M430 567v5M431 561v11M432 548v14M433 548v23M434 567v9M435 567v7M436 554v20M437 564v10M438 564v15M439 563v6M440 549v23M441 561v11M442 561v25M443 573v5M444 560v14M445 558v3M446 558v24M447 559v18M448 546v31M449 562v2M450 563v4M451 565v1M452 557v15M453 557v6M454 557v9M455 558v8M456 529v44M457 529v44M458 555v18M459 552v4M460 552v30M461 579v3M462 572v8M463 554v19M464 554v1M465 554v18M466 556v4M467 551v16M468 566v7M469 550v23M470 550v21M471 545v26M472 548v20M473 567v14M474 568v4M475 559v23M476 541v41M477 541v32M478 572v12M479 560v24M480 551v10M481 551v17M482 567v18M483 556v29M484 556v13M485 562v7M486 563v5M487 561v16M488 561v19M489 551v29M490 560v15M491 560v13M492 561v7M493 559v15M494 573v9M495 568v14M496 568v13M497 572v10M498 564v18M499 564v5M500 539v27M501 539v25M502 559v3M503 559v13M504 533v39M505 533v1M506 533v1M507 533v1M508 533v1M509 533v1M510 533v1M511 533v1M512 533v1M513 533v1M514 533v1M515 533v1M516 533v1M517 533v1M518 533v1M519 533v1M520 533v1M521 533v1M522 533v1M523 533v1M524 533v1M525 533v1M526 533v1M527 533v1M528 533v1M529 533v1M530 533v1M531 533v1M532 533v1M533 533v1M534 533v1M535 533v1M536 533v1M537 533v1M538 533v1M539 533v1M540 533v1M541 533v1M542 533v1M543 533v1M544 533v1M545 533v1M546 533v1M547 533v1M548 533v1M549 533v1M550 533v1M551 533v1M552 533v1M553 533v1M554 533v1M555 533v1M556 533v1M557 533v1M558 533v1M559 533v1M560 533v1M561 533v1M562 533v1M563 533v1M564 533v1M565 533v1M566 533v1M567 533v1M568 533v1M569 533v1M570 533v1M571 533v1M572 533v1M573 533v1M574 533v1M575 533v1M576 533v1M577 533v1M578 533v1M579 533v1M580 533v1M581 533v1M582 533v1M583 533v1M584 533v1M585 533v1M586 533v1M587 533v1M588 533v1M589 533v14M590 526v28M591 526v23M592 537v25M593 549v13M594 546v4M595 546v6M596 551v28M597 553v26M598 550v8M599 539v12M600 526v17M601 538v5M602 538v4M603 541v2M604 542v10M605 544v8M606 530v15M607 532v9M608 532v29M609 544v2M610 542v20M611 561v6M612 552v18M613 524v29M614 524v37M615 544v17M616 544v8M617 546v7M618 552v9M619 540v14M620 535v10M621 535v24M622 537v22M623 546v2M624 535v15M625 545v5M626 541v5M627 539v3M628 534v9M629 542v11M630 523v30M631 543v6M632 543v27M633 546v24M634 542v5M635 539v9M636 537v3M637 537v11M638 546v2M639 546v11M640 533v24M641 533v27M642 545v4M643 540v29M644 540v12M645 545v7M646 550v13M647 545v18M648 537v10M649 537v28M650 536v29M651 536v4M652 539v4M653 542v13M654 542v10M655 518v34M656 549v10M657 533v26M658 533v21M659 532v40M660 532v13M661 540v13M662 540v17M663 538v22M664 538v15M665 542v11M666 539v9M667 539v29M668 540v28M669 538v15M670 538v9M671 533v18M672 550v18M673 542v26M674 542v30M675 553v20M676 553v17M677 557v13M678 566v17M679 571v12M680 514v58M681 514v69M682 578v5M683 573v6M684 574v4M685 549v26M686 565v12M687 552v25M688 552v10M689 561v21M690 581v5M691 569v17M692 569v16M693 568v17M694 568v23M695 568v23M696 562v7M697 558v8M698 552v7M699 552v19M700 547v24M701 547v12M702 558v19M703 564v26M704 571v19M705 571v22M706 558v15M707 552v17M708 552v17M709 567v5M710 562v10M711 556v13M712 552v5M713 552v28M714 562v18M715 554v9M716 561v5M717 554v12M718 552v42M719 552v9M720 560v14M721 565v9M722 562v21M723 560v23M724 553v15M725 553v9M726 561v9M727 561v7M728 561v6M729 562v14M730 573v8M731 573v10M732 564v19M733 564v21M734 560v25M735 560v14M736 568v13M737 578v3M738 551v28M739 551v13M740 563v22M741 558v6M742 558v23M743 568v13M744 546v32M745 564v14M746 564v17M747 572v9M748 556v17M749 556v21M750 572v5M751 576v13M752 552v37M753 552v2M754 553v20M755 554v4M756 557v15M757 568v4M758 549v23M759 549v13M760 543v22M761 543v9M762 551v21M763 560v3M764 549v12M765 542v8M766 542v13M767 550v10M768 539v21M769 539v17M770 531v29M771 531v13M772 543v27M773 555v15M774 540v18M775 554v4M776 545v13M777 538v8M778 538v27M779 554v2M780 554v11M781 544v21M782 544v7M783 537v9M784 537v19M785 546v11M786 548v9M787 548v6M788 537v31M789 537v14M790 550v25M791 552v23M792 542v11M793 541v2M794 541v16M795 545v23M796 543v25M797 543v16M798 551v8M799 550v2M800 537v26M801 538v25M802 538v27M803 553v7M804 553v5M805 547v11M806 530v23M807 530v25M808 548v7M809 546v9M810 554v10M811 550v14M812 543v8M813 543v11M814 546v8M815 546v12M816 538v12M817 538v4M818 538v18M819 550v13M820 543v20M821 543v23M822 557v9M823 549v26M824 566v9M825 542v25M826 551v2M827 536v33M828 536v7M829 542v22M830 546v18M831 540v16M832 554v2M833 546v11M834 546v9M835 554v13M836 566v3M837 536v33M838 536v8M839 538v20M840 552v6M841 548v6M842 535v19M843 535v31M844 558v12M845 557v16M846 557v29M847 554v32M848 556v7M849 542v21M850 542v22M851 558v6M852 560v2M853 560v13M854 559v14M855 556v15M856 556v2M857 557v14M858 562v3M859 554v13M860 554v12M861 563v22M862 559v26M863 559v21M864 549v21M865 547v23M866 569v10M867 561v18M868 562v8M869 554v25M870 550v5M871 550v30M872 572v2M873 558v28M874 563v23M875 563v11M876 558v16M877 558v27M878 573v7M879 558v16M880 568v6M881 560v14M882 570v2M883 562v10M884 538v25M885 538v39M886 562v5M887 550v19M888 550v9M889 558v12M890 562v12M891 562v7M892 558v14M893 558v20M894 557v21M895 557v10M896 558v16M897 558v16M898 551v22M899 551v7M900 549v12M901 549v13M902 549v23M903 549v13M904 553v11M905 553v11M906 553v25M907 577v3M908 557v28M909 582v3M910 562v21M911 560v3M912 557v17M913 557v5M914 553v9M915 555v17M916 563v9M917 560v7M918 560v5M919 557v8M920 557v8M921 557v8M922 555v12M923 555v1M924 552v7M925 558v10M926 563v5M927 563v20M928 549v34" fill="none" stroke="#fff" stroke-width="1" transform="translate(.5 0)"/>
<rect x="79" y="598" width="1" height="5" fill="#000"/>
<text x="79" y="614" text-anchor="middle">0</text>
<rect x="86" y="598" width="1" height="3" fill="#000"/>
<rect x="92" y="598" width="1" height="3" fill="#000"/>
<rect x="99" y="598" width="1" height="3" fill="#000"/>
<rect x="106" y="598" width="1" height="3" fill="#000"/>
<rect x="112" y="598" width="1" height="3" fill="#000"/>
<rect x="119" y="598" width="1" height="3" fill="#000"/>
<rect x="125" y="598" width="1" height="3" fill="#000"/>
<rect x="132" y="598" width="1" height="3" fill="#000"/>
<rect x="139" y="598" width="1" height="3" fill="#000"/>
<rect x="145" y="598" width="1" height="3" fill="#000"/>
<rect x="152" y="598" width="1" height="3" fill="#000"/>
<rect x="159" y="598" width="1" height="3" fill="#000"/>
<rect x="164" y="598" width="1" height="5" fill="#000"/>
<text x="164" y="614" text-anchor="middle">128</text>
<rect x="171" y="598" width="1" height="3" fill="#000"/>
<rect x="177" y="598" width="1" height="3" fill="#000"/>
<rect x="184" y="598" width="1" height="3" fill="#000"/>
<rect x="191" y="598" width="1" height="3" fill="#000"/>
<rect x="197" y="598" width="1" height="3" fill="#000"/>
<rect x="204" y="598" width="1" height="3" fill="#000"/>
<rect x="210" y="598" width="1" height="3" fill="#000"/>
<rect x="217" y="598" width="1" height="3" fill="#000"/>
<rect x="224" y="598" width="1" height="3" fill="#000"/>
<rect x="230" y="598" width="1" height="3" fill="#000"/>
<rect x="237" y="598" width="1" height="3" fill="#000"/>
<rect x="244" y="598" width="1" height="3" fill="#000"/>
<rect x="249" y="598" width="1" height="5" fill="#000"/>
<text x="249" y="614" text-anchor="middle">256</text>
<rect x="256" y="598" width="1" height="3" fill="#000"/>
<rect x="262" y="598" width="1" height="3" fill="#000"/>
<rect x="269" y="598" width="1" height="3" fill="#000"/>
<rect x="276" y="598" width="1" height="3" fill="#000"/>
<rect x="282" y="598" width="1" height="3" fill="#000"/>
<rect x="289" y="598" width="1" height="3" fill="#000"/>
<rect x="295" y="598" width="1" height="3" fill="#000"/>
<rect x="302" y="598" width="1" height="3" fill="#000"/>
<rect x="309" y="598" width="1" height="3" fill="#000"/>
<rect x="315" y="598" width="1" height="3" fill="#000"/>
<rect x="322" y="598" width="1" height="3" fill="#000"/>
<rect x="329" y="598" width="1" height="3" fill="#000"/>
<rect x="334" y="598" width="1" height="5" fill="#000"/>
<text x="334" y="614" text-anchor="middle">384</text>
<rect x="341" y="598" width="1" height="3" fill="#000"/>
<rect x="347" y="598" width="1" height="3" fill="#000"/>
<rect x="354" y="598" width="1" height="3" fill="#000"/>
<rect x="361" y="598" width="1" height="3" fill="#000"/>
<rect x="367" y="598" width="1" height="3" fill="#000"/>
<rect x="374" y="598" width="1" height="3" fill="#000"/>
<rect x="380" y="598" width="1" height="3" fill="#000"/>
<rect x="387" y="598" width="1" height="3" fill="#000"/>
<rect x="394" y="598" width="1" height="3" fill="#000"/>
<rect x="400" y="598" width="1" height="3" fill="#000"/>
<rect x="407" y="598" width="1" height="3" fill="#000"/>
<rect x="414" y="598" width="1" height="3" fill="#000"/>
<rect x="419" y="598" width="1" height="5" fill="#000"/>
<text x="419" y="614" text-anchor="middle">512</text>
<rect x="426" y="598" width="1" height="3" fill="#000"/>
<rect x="432" y="598" width="1" height="3" fill="#000"/>
<rect x="439" y="598" width="1" height="3" fill="#000"/>
<rect x="446" y="598" width="1" height="3" fill="#000"/>
<rect x="452" y="598" width="1" height="3" fill="#000"/>
<rect x="459" y="598" width="1" height="3" fill="#000"/>
<rect x="465" y="598" width="1" height="3" fill="#000"/>
<rect x="472" y="598" width="1" height="3" fill="#000"/>
<rect x="479" y="598" width="1" height="3" fill="#000"/>
<rect x="485" y="598" width="1" height="3" fill="#000"/>
<rect x="492" y="598" width="1" height="3" fill="#000"/>
<rect x="499" y="598" width="1" height="3" fill="#000"/>
<rect x="504" y="598" width="1" height="5" fill="#000"/>
<text x="504" y="614" text-anchor="middle">640</text>
<rect x="511" y="598" width="1" height="3" fill="#000"/>
<rect x="517" y="598" width="1" height="3" fill="#000"/>
<rect x="524" y="598" width="1" height="3" fill="#000"/>
<rect x="531" y="598" width="1" height="3" fill="#000"/>
<rect x="537" y="598" width="1" height="3" fill="#000"/>
<rect x="544" y="598" width="1" height="3" fill="#000"/>
<rect x="550" y="598" width="1" height="3" fill="#000"/>
<rect x="557" y="598" width="1" height="3" fill="#000"/>
<rect x="564" y="598" width="1" height="3" fill="#000"/>
<rect x="570" y="598" width="1" height="3" fill="#000"/>
<rect x="577" y="598" width="1" height="3" fill="#000"/>
<rect x="584" y="598" width="1" height="3" fill="#000"/>
<rect x="589" y="598" width="1" height="5" fill="#000"/>
<text x="589" y="614" text-anchor="middle">768</text>
<rect x="596" y="598" width="1" height="3" fill="#000"/>
<rect x="602" y="598" width="1" height="3" fill="#000"/>
<rect x="609" y="598" width="1" height="3" fill="#000"/>
<rect x="616" y="598" width="1" height="3" fill="#000"/>
<rect x="622" y="598" width="1" height="3" fill="#000"/>
<rect x="629" y="598" width="1" height="3" fill="#000"/>
<rect x="635" y="598" width="1" height="3" fill="#000"/>
<rect x="642" y="598" width="1" height="3" fill="#000"/>
<rect x="649" y="598" width="1" height="3" fill="#000"/>
<rect x="655" y="598" width="1" height="3" fill="#000"/>
<rect x="662" y="598" width="1" height="3" fill="#000"/>
<rect x="669" y="598" width="1" height="3" fill="#000"/>
<rect x="674" y="598" width="1" height="5" fill="#000"/>
<text x="674" y="614" text-anchor="middle">896</text>
<rect x="681" y="598" width="1" height="3" fill="#000"/>
<rect x="687" y="598" width="1" height="3" fill="#000"/>
<rect x="694" y="598" width="1" height="3" fill="#000"/>
<rect x="701" y="598" width="1" height="3" fill="#000"/>
<rect x="707" y="598" width="1" height="3" fill="#000"/>
<rect x="714" y="598" width="1" height="3" fill="#000"/>
<rect x="720" y="598" width="1" height="3" fill="#000"/>
<rect x="727" y="598" width="1" height="3" fill="#000"/>
<rect x="734" y="598" width="1" height="3" fill="#000"/>
<rect x="740" y="598" width="1" height="3" fill="#000"/>
<rect x="747" y="598" width="1" height="3" fill="#000"/>
<rect x="754" y="598" width="1" height="3" fill="#000"/>
<rect x="759" y="598" width="1" height="5" fill="#000"/>
<text x="759" y="614" text-anchor="middle">1024</text>
<rect x="766" y="598" width="1" height="3" fill="#000"/>
<rect x="772" y="598" width="1" height="3" fill="#000"/>
<rect x="779" y="598" width="1" height="3" fill="#000"/>
<rect x="786" y="598" width="1" height="3" fill="#000"/>
<rect x="792" y="598" width="1" height="3" fill="#000"/>
<rect x="799" y="598" width="1" height="3" fill="#000"/>
<rect x="805" y="598" width="1" height="3" fill="#000"/>
<rect x="812" y="598" width="1" height="3" fill="#000"/>
<rect x="819" y="598" width="1" height="3" fill="#000"/>
<rect x="825" y="598" width="1" height="3" fill="#000"/>
<rect x="832" y="598" width="1" height="3" fill="#000"/>
<rect x="839" y="598" width="1" height="3" fill="#000"/>
<rect x="844" y="598" width="1" height="5" fill="#000"/>
<text x="844" y="614" text-anchor="middle">1152</text>
<rect x="851" y="598" width="1" height="3" fill="#000"/>
<rect x="857" y="598" width="1" height="3" fill="#000"/>
<rect x="864" y="598" width="1" height="3" fill="#000"/>
<rect x="871" y="598" width="1" height="3" fill="#000"/>
<rect x="877" y="598" width="1" height="3" fill="#000"/>
<rect x="884" y="598" width="1" height="3" fill="#000"/>
<rect x="890" y="598" width="1" height="3" fill="#000"/>
<rect x="897" y="598" width="1" height="3" fill="#000"/>
<rect x="904" y="598" width="1" height="3" fill="#000"/>
<rect x="910" y="598" width="1" height="3" fill="#000"/>
<rect x="917" y="598" width="1" height="3" fill="#000"/>
<rect x="924" y="598" width="1" height="3" fill="#000"/>
<rect x="929" y="598" width="1" height="5" fill="#000"/>
<text x="929" y="614" text-anchor="middle">1280</text>
<rect x="72" y="595" width="5" height="1" fill="#000"/>
<text x="69.5" y="599.5" text-anchor="end">-30</text>
<rect x="72" y="574" width="5" height="1" fill="#000"/>
<text x="69.5" y="578.5" text-anchor="end">-20</text>
<rect x="72" y="554" width="5" height="1" fill="#000"/>
<text x="69.5" y="558.5" text-anchor="end">-10</text>
<rect x="72" y="533" width="5" height="1" fill="#000"/>
<text x="69.5" y="537.5" text-anchor="end">0</text>
<rect x="72" y="512" width="5" height="1" fill="#000"/>
<text x="69.5" y="516.5" text-anchor="end">10</text>
<rect x="72" y="492" width="5" height="1" fill="#000"/>
<text x="69.5" y="496.5" text-anchor="end">20</text>
<rect x="72" y="471" width="5" height="1" fill="#000"/>
<text x="69.5" y="475.5" text-anchor="end">30</text>
<text x="48" y="531.5" text-anchor="middle" transform="rotate(-90 48 531.5)" style="font-size:11px">Offset (mV)</text>
</svg>
<svg class="a" style="left:34px;top:621px" width="920" height="160" viewBox="34 621 920 160" shape-rendering="crispEdges">
<defs><linearGradient id="g621" x1="0" x2="1"><stop offset="0" stop-color="#d6d6d6"/><stop offset="0.008" stop-color="#cfcfcf"/><stop offset="0.015" stop-color="#c1c1c1"/><stop offset="0.985" stop-color="#c1c1c1"/><stop offset="0.993" stop-color="#9c9c9c"/><stop offset="0.999" stop-color="#6a6a6a"/><stop offset="1" stop-color="#4c4c4c"/></linearGradient></defs>
<rect x="34" y="621" width="920" height="160" fill="url(#g621)"/>
<rect x="34" y="621" width="914" height="2" fill="#d8d8d8"/><rect x="38" y="779" width="916" height="1" fill="#909090"/><rect x="36" y="780" width="918" height="1" fill="#6a6a6a"/>
<rect x="74" y="630" width="857" height="127" fill="#d2d2d2"/>
<rect x="74" y="630" width="856" height="126" fill="#5c5c5c"/>
<rect x="75" y="631" width="855" height="125" fill="#000"/>
<rect x="160" y="631" width="1" height="125" fill="#00ee00"/>
<rect x="246" y="631" width="1" height="125" fill="#00ee00"/>
<rect x="331" y="631" width="1" height="125" fill="#00ee00"/>
<rect x="417" y="631" width="1" height="125" fill="#00ee00"/>
<rect x="502" y="631" width="1" height="125" fill="#00ee00"/>
<rect x="587" y="631" width="1" height="125" fill="#00ee00"/>
<rect x="673" y="631" width="1" height="125" fill="#00ee00"/>
<rect x="758" y="631" width="1" height="125" fill="#00ee00"/>
<rect x="844" y="631" width="1" height="125" fill="#00ee00"/>
<path d="M75 662v1M76 662v69M77 693v38M78 685v13M79 685v5M80 689v6M81 691v4M82 690v2M83 691v5M84 692v4M85 692v2M86 692v6M87 692v2M88 692v2M89 692v7M90 690v9M91 691v8M92 693v6M93 695v2M94 690v6M95 686v6M96 686v12M97 693v5M98 687v15M99 687v6M100 692v2M101 693v4M102 694v3M103 695v2M104 692v6M105 688v10M106 688v10M107 690v7M108 692v7M109 692v2M110 693v2M111 694v3M112 692v5M113 693v3M114 690v9M115 695v4M116 695v2M117 696v3M118 693v6M119 693v2M120 691v9M121 691v1M122 691v7M123 696v2M124 687v10M125 688v5M126 689v9M127 689v5M128 688v9M129 692v5M130 691v4M131 691v6M132 690v7M133 695v3M134 692v6M135 693v9M136 693v9M137 693v1M138 687v10M139 694v3M140 694v6M141 696v4M142 694v3M143 691v4M144 690v2M145 690v5M146 692v5M147 692v5M148 692v4M149 695v11M150 685v21M151 685v10M152 693v4M153 690v4M154 690v5M155 694v5M156 695v4M157 692v7M158 689v4M159 690v7M160 696v4M161 693v7M162 692v2M163 692v2M164 693v9M165 690v12M166 688v10M167 688v14M168 697v5M169 693v5M170 692v5M171 692v5M172 692v8M173 696v3M174 696v3M175 693v4M176 683v17M177 695v5M178 692v4M179 689v6M180 689v10M181 692v6M182 692v6M183 693v2M184 693v9M185 698v4M186 692v7M187 692v4M188 692v8M189 691v2M190 691v12M191 688v6M192 688v10M193 691v4M194 691v6M195 696v2M196 696v2M197 696v1M198 691v7M199 691v6M200 696v3M201 693v5M202 693v10M203 692v2M204 690v7M205 696v2M206 694v4M207 690v5M208 690v7M209 696v4M210 694v6M211 690v5M212 690v5M213 690v1M214 690v9M215 696v3M216 695v3M217 692v6M218 690v3M219 690v4M220 693v4M221 693v5M222 694v4M223 690v8M224 690v14M225 691v1M226 691v4M227 693v2M228 689v6M229 689v6M230 689v8M231 693v4M232 693v7M233 693v7M234 692v6M235 692v6M236 697v4M237 694v6M238 693v2M239 693v5M240 692v6M241 695v2M242 691v5M243 695v7M244 692v10M245 694v3M246 668v68M247 691v45M248 685v9M249 685v16M250 692v9M251 690v3M252 690v7M253 689v8M254 689v7M255 693v2M256 692v7M257 695v4M258 693v3M259 690v4M260 690v3M261 692v3M262 689v8M263 694v3M264 694v6M265 691v7M266 691v10M267 694v7M268 694v5M269 693v6M270 693v3M271 690v5M272 690v7M273 690v6M274 689v7M275 689v4M276 692v4M277 693v2M278 691v9M279 691v4M280 694v5M281 691v7M282 686v13M283 686v12M284 693v10M285 694v9M286 692v4M287 692v2M288 693v3M289 686v10M290 691v6M291 693v12M292 696v9M293 689v8M294 693v4M295 691v8M296 691v3M297 691v4M298 688v4M299 688v13M300 692v9M301 692v7M302 698v2M303 695v5M304 694v2M305 693v4M306 693v1M307 693v3M308 693v4M309 694v6M310 691v4M311 685v17M312 696v6M313 693v5M314 693v5M315 690v8M316 690v7M317 688v9M318 688v4M319 687v13M320 687v10M321 693v4M322 695v1M323 692v5M324 692v5M325 696v3M326 694v3M327 691v11M328 691v6M329 689v8M330 689v5M331 692v4M332 695v1M333 694v7M334 694v2M335 692v10M336 688v5M337 688v5M338 689v6M339 693v5M340 693v2M341 690v8M342 690v4M343 692v4M344 692v3M345 688v7M346 688v8M347 688v10M348 685v4M349 685v12M350 696v2M351 693v5M352 693v2M353 690v7M354 695v2M355 688v10M356 688v2M357 689v8M358 689v8M359 689v4M360 691v1M361 691v4M362 694v5M363 694v5M364 694v4M365 689v9M366 689v7M367 695v2M368 692v5M369 687v7M370 693v1M371 692v6M372 691v2M373 691v4M374 693v3M375 689v7M376 689v4M377 691v3M378 693v3M379 694v3M380 693v2M381 690v4M382 690v2M383 688v4M384 690v5M385 693v7M386 687v13M387 687v9M388 687v8M389 687v11M390 693v3M391 693v3M392 692v2M393 691v3M394 691v3M395 691v4M396 689v3M397 689v11M398 692v3M399 692v12M400 692v12M401 690v6M402 690v4M403 693v2M404 693v2M405 693v4M406 690v6M407 690v5M408 691v3M409 693v4M410 690v7M411 690v7M412 692v7M413 692v7M414 692v4M415 694v6M416 693v2M417 692v2M418 687v7M419 687v6M420 688v5M421 688v6M422 688v6M423 687v6M424 687v7M425 686v8M426 686v4M427 689v1M428 688v2M429 688v3M430 689v3M431 684v11M432 688v7M433 688v7M434 686v4M435 685v10M436 685v10M437 689v6M438 689v6M439 687v8M440 689v12M441 693v8M442 689v5M443 689v6M444 688v6M445 688v7M446 690v6M447 686v10M448 686v9M449 694v6M450 687v10M451 687v7M452 687v9M453 691v5M454 687v5M455 687v8M456 690v5M457 689v2M458 689v3M459 691v3M460 691v9M461 686v14M462 686v4M463 689v8M464 686v11M465 686v7M466 690v2M467 690v4M468 686v5M469 684v9M470 684v6M471 687v4M472 687v2M473 687v3M474 689v5M475 685v9M476 691v3M477 688v6M478 688v4M479 689v3M480 684v6M481 684v12M482 693v3M483 689v5M484 691v3M485 688v6M486 688v4M487 690v4M488 693v1M489 692v4M490 689v7M491 689v4M492 690v3M493 690v4M494 693v1M495 686v8M496 686v11M497 688v9M498 688v7M499 694v1M500 694v4M501 687v11M502 692v64M503 755v1M504 755v1M505 755v1M506 755v1M507 755v1M508 755v1M509 755v1M510 755v1M511 755v1M512 755v1M513 755v1M514 755v1M515 755v1M516 755v1M517 755v1M518 755v1M519 755v1M520 755v1M521 755v1M522 755v1M523 755v1M524 755v1M525 755v1M526 755v1M527 755v1M528 755v1M529 755v1M530 755v1M531 755v1M532 755v1M533 755v1M534 755v1M535 755v1M536 755v1M537 755v1M538 755v1M539 755v1M540 755v1M541 755v1M542 755v1M543 755v1M544 755v1M545 755v1M546 755v1M547 755v1M548 755v1M549 755v1M550 755v1M551 755v1M552 755v1M553 755v1M554 755v1M555 755v1M556 755v1M557 755v1M558 755v1M559 755v1M560 755v1M561 755v1M562 755v1M563 755v1M564 755v1M565 755v1M566 755v1M567 755v1M568 755v1M569 755v1M570 755v1M571 755v1M572 755v1M573 755v1M574 755v1M575 755v1M576 755v1M577 755v1M578 755v1M579 755v1M580 755v1M581 755v1M582 755v1M583 755v1M584 755v1M585 755v1M586 755v1M587 688v68M588 688v4M589 685v7M590 685v4M591 687v5M592 687v6M593 686v11M594 684v3M595 684v8M596 691v12M597 688v15M598 688v4M599 685v9M600 688v6M601 688v2M602 689v7M603 689v7M604 689v3M605 691v5M606 692v2M607 687v7M608 687v3M609 689v3M610 689v3M611 689v9M612 687v4M613 687v6M614 688v8M615 690v6M616 689v3M617 683v8M618 683v19M619 692v10M620 690v3M621 690v3M622 692v5M623 693v4M624 685v9M625 681v13M626 681v7M627 687v5M628 687v1M629 687v10M630 685v12M631 685v9M632 687v2M633 688v9M634 688v1M635 686v5M636 689v2M637 689v3M638 685v7M639 685v3M640 685v5M641 686v8M642 692v2M643 687v6M644 691v2M645 690v7M646 690v7M647 688v4M648 691v4M649 684v11M650 689v6M651 692v5M652 696v1M653 693v5M654 689v5M655 688v4M656 687v5M657 687v8M658 693v2M659 688v6M660 686v3M661 686v12M662 683v15M663 683v9M664 687v4M665 685v11M666 685v5M667 685v5M668 688v6M669 687v7M670 687v6M671 686v7M672 686v9M673 694v3M674 691v4M675 691v7M676 692v6M677 692v5M678 693v1M679 693v36M680 666v63M681 666v28M682 693v3M683 694v2M684 690v5M685 690v6M686 695v5M687 694v6M688 694v5M689 693v6M690 690v4M691 687v9M692 687v5M693 691v2M694 692v3M695 694v3M696 694v1M697 689v6M698 687v3M699 687v6M700 691v6M701 694v8M702 693v2M703 686v8M704 686v8M705 690v4M706 690v4M707 691v3M708 689v5M709 689v14M710 694v9M711 690v5M712 690v7M713 692v5M714 692v5M715 692v6M716 691v8M717 691v8M718 691v9M719 691v4M720 690v13M721 690v9M722 694v5M723 687v8M724 687v8M725 691v4M726 692v8M727 694v6M728 694v4M729 693v5M730 690v4M731 692v4M732 692v7M733 693v6M734 692v3M735 694v2M736 694v3M737 695v2M738 692v10M739 690v12M740 690v4M741 693v5M742 695v3M743 692v5M744 690v3M745 690v5M746 694v8M747 695v3M748 693v7M749 695v5M750 694v3M751 695v2M752 686v10M753 687v8M754 687v11M755 692v6M756 692v5M757 694v9M758 693v10M759 690v7M760 690v6M761 695v3M762 693v5M763 695v2M764 687v10M765 691v4M766 689v4M767 691v2M768 690v3M769 690v3M770 692v2M771 693v3M772 695v2M773 693v4M774 689v9M775 696v2M776 694v4M777 690v5M778 690v6M779 693v9M780 692v10M781 692v5M782 692v8M783 692v3M784 688v9M785 694v3M786 693v3M787 693v8M788 689v12M789 691v4M790 692v4M791 692v1M792 692v4M793 692v3M794 692v4M795 695v1M796 695v4M797 697v2M798 691v7M799 691v4M800 694v13M801 692v8M802 688v5M803 690v5M804 694v2M805 688v8M806 688v10M807 690v8M808 690v11M809 696v5M810 690v7M811 691v8M812 691v8M813 691v2M814 692v6M815 691v4M816 691v7M817 686v12M818 686v14M819 695v5M820 695v9M821 694v3M822 685v10M823 692v2M824 691v3M825 693v4M826 689v8M827 688v5M828 688v10M829 695v3M830 695v1M831 692v4M832 692v5M833 689v8M834 689v5M835 693v5M836 696v2M837 696v1M838 693v5M839 692v2M840 692v6M841 692v6M842 687v7M843 693v3M844 692v21M845 692v4M846 690v6M847 694v2M848 689v7M849 695v4M850 690v9M851 690v8M852 689v9M853 689v4M854 690v4M855 693v3M856 694v2M857 692v3M858 692v11M859 693v7M860 691v5M861 693v3M862 693v5M863 692v6M864 692v3M865 694v4M866 693v5M867 693v2M868 693v2M869 691v4M870 687v5M871 687v2M872 688v10M873 691v7M874 688v8M875 688v11M876 688v11M877 688v6M878 690v4M879 691v4M880 690v7M881 694v3M882 686v9M883 692v2M884 688v9M885 688v9M886 695v2M887 695v2M888 694v5M889 694v2M890 693v4M891 696v1M892 693v4M893 693v4M894 693v4M895 689v6M896 689v3M897 690v2M898 688v8M899 688v5M900 692v4M901 692v5M902 687v10M903 692v7M904 695v4M905 695v1M906 690v6M907 690v1M908 690v7M909 689v8M910 689v11M911 695v5M912 694v3M913 690v7M914 690v4M915 693v5M916 696v5M917 696v1M918 696v5M919 698v3M920 692v7M921 692v4M922 693v3M923 693v1M924 689v8M925 692v5M926 689v9M927 689v3M928 690v4" fill="none" stroke="#ff0" stroke-width="1" transform="translate(.5 0)"/>
<rect x="75" y="758" width="1" height="5" fill="#000"/>
<text x="75" y="774" text-anchor="middle">0</text>
<rect x="82" y="758" width="1" height="3" fill="#000"/>
<rect x="88" y="758" width="1" height="3" fill="#000"/>
<rect x="95" y="758" width="1" height="3" fill="#000"/>
<rect x="102" y="758" width="1" height="3" fill="#000"/>
<rect x="108" y="758" width="1" height="3" fill="#000"/>
<rect x="115" y="758" width="1" height="3" fill="#000"/>
<rect x="122" y="758" width="1" height="3" fill="#000"/>
<rect x="128" y="758" width="1" height="3" fill="#000"/>
<rect x="135" y="758" width="1" height="3" fill="#000"/>
<rect x="142" y="758" width="1" height="3" fill="#000"/>
<rect x="148" y="758" width="1" height="3" fill="#000"/>
<rect x="155" y="758" width="1" height="3" fill="#000"/>
<rect x="160" y="758" width="1" height="5" fill="#000"/>
<text x="160" y="774" text-anchor="middle">128</text>
<rect x="167" y="758" width="1" height="3" fill="#000"/>
<rect x="174" y="758" width="1" height="3" fill="#000"/>
<rect x="180" y="758" width="1" height="3" fill="#000"/>
<rect x="187" y="758" width="1" height="3" fill="#000"/>
<rect x="194" y="758" width="1" height="3" fill="#000"/>
<rect x="200" y="758" width="1" height="3" fill="#000"/>
<rect x="207" y="758" width="1" height="3" fill="#000"/>
<rect x="214" y="758" width="1" height="3" fill="#000"/>
<rect x="220" y="758" width="1" height="3" fill="#000"/>
<rect x="227" y="758" width="1" height="3" fill="#000"/>
<rect x="234" y="758" width="1" height="3" fill="#000"/>
<rect x="240" y="758" width="1" height="3" fill="#000"/>
<rect x="246" y="758" width="1" height="5" fill="#000"/>
<text x="246" y="774" text-anchor="middle">256</text>
<rect x="252" y="758" width="1" height="3" fill="#000"/>
<rect x="259" y="758" width="1" height="3" fill="#000"/>
<rect x="266" y="758" width="1" height="3" fill="#000"/>
<rect x="272" y="758" width="1" height="3" fill="#000"/>
<rect x="279" y="758" width="1" height="3" fill="#000"/>
<rect x="286" y="758" width="1" height="3" fill="#000"/>
<rect x="293" y="758" width="1" height="3" fill="#000"/>
<rect x="299" y="758" width="1" height="3" fill="#000"/>
<rect x="306" y="758" width="1" height="3" fill="#000"/>
<rect x="313" y="758" width="1" height="3" fill="#000"/>
<rect x="319" y="758" width="1" height="3" fill="#000"/>
<rect x="326" y="758" width="1" height="3" fill="#000"/>
<rect x="331" y="758" width="1" height="5" fill="#000"/>
<text x="331" y="774" text-anchor="middle">384</text>
<rect x="338" y="758" width="1" height="3" fill="#000"/>
<rect x="345" y="758" width="1" height="3" fill="#000"/>
<rect x="351" y="758" width="1" height="3" fill="#000"/>
<rect x="358" y="758" width="1" height="3" fill="#000"/>
<rect x="365" y="758" width="1" height="3" fill="#000"/>
<rect x="371" y="758" width="1" height="3" fill="#000"/>
<rect x="378" y="758" width="1" height="3" fill="#000"/>
<rect x="385" y="758" width="1" height="3" fill="#000"/>
<rect x="391" y="758" width="1" height="3" fill="#000"/>
<rect x="398" y="758" width="1" height="3" fill="#000"/>
<rect x="405" y="758" width="1" height="3" fill="#000"/>
<rect x="411" y="758" width="1" height="3" fill="#000"/>
<rect x="417" y="758" width="1" height="5" fill="#000"/>
<text x="417" y="774" text-anchor="middle">512</text>
<rect x="423" y="758" width="1" height="3" fill="#000"/>
<rect x="430" y="758" width="1" height="3" fill="#000"/>
<rect x="437" y="758" width="1" height="3" fill="#000"/>
<rect x="443" y="758" width="1" height="3" fill="#000"/>
<rect x="450" y="758" width="1" height="3" fill="#000"/>
<rect x="457" y="758" width="1" height="3" fill="#000"/>
<rect x="463" y="758" width="1" height="3" fill="#000"/>
<rect x="470" y="758" width="1" height="3" fill="#000"/>
<rect x="477" y="758" width="1" height="3" fill="#000"/>
<rect x="483" y="758" width="1" height="3" fill="#000"/>
<rect x="490" y="758" width="1" height="3" fill="#000"/>
<rect x="497" y="758" width="1" height="3" fill="#000"/>
<rect x="502" y="758" width="1" height="5" fill="#000"/>
<text x="502" y="774" text-anchor="middle">640</text>
<rect x="509" y="758" width="1" height="3" fill="#000"/>
<rect x="515" y="758" width="1" height="3" fill="#000"/>
<rect x="522" y="758" width="1" height="3" fill="#000"/>
<rect x="529" y="758" width="1" height="3" fill="#000"/>
<rect x="535" y="758" width="1" height="3" fill="#000"/>
<rect x="542" y="758" width="1" height="3" fill="#000"/>
<rect x="549" y="758" width="1" height="3" fill="#000"/>
<rect x="555" y="758" width="1" height="3" fill="#000"/>
<rect x="562" y="758" width="1" height="3" fill="#000"/>
<rect x="569" y="758" width="1" height="3" fill="#000"/>
<rect x="575" y="758" width="1" height="3" fill="#000"/>
<rect x="582" y="758" width="1" height="3" fill="#000"/>
<rect x="587" y="758" width="1" height="5" fill="#000"/>
<text x="587" y="774" text-anchor="middle">768</text>
<rect x="594" y="758" width="1" height="3" fill="#000"/>
<rect x="601" y="758" width="1" height="3" fill="#000"/>
<rect x="607" y="758" width="1" height="3" fill="#000"/>
<rect x="614" y="758" width="1" height="3" fill="#000"/>
<rect x="621" y="758" width="1" height="3" fill="#000"/>
<rect x="627" y="758" width="1" height="3" fill="#000"/>
<rect x="634" y="758" width="1" height="3" fill="#000"/>
<rect x="641" y="758" width="1" height="3" fill="#000"/>
<rect x="647" y="758" width="1" height="3" fill="#000"/>
<rect x="654" y="758" width="1" height="3" fill="#000"/>
<rect x="661" y="758" width="1" height="3" fill="#000"/>
<rect x="667" y="758" width="1" height="3" fill="#000"/>
<rect x="673" y="758" width="1" height="5" fill="#000"/>
<text x="673" y="774" text-anchor="middle">896</text>
<rect x="679" y="758" width="1" height="3" fill="#000"/>
<rect x="686" y="758" width="1" height="3" fill="#000"/>
<rect x="693" y="758" width="1" height="3" fill="#000"/>
<rect x="699" y="758" width="1" height="3" fill="#000"/>
<rect x="706" y="758" width="1" height="3" fill="#000"/>
<rect x="713" y="758" width="1" height="3" fill="#000"/>
<rect x="720" y="758" width="1" height="3" fill="#000"/>
<rect x="726" y="758" width="1" height="3" fill="#000"/>
<rect x="733" y="758" width="1" height="3" fill="#000"/>
<rect x="740" y="758" width="1" height="3" fill="#000"/>
<rect x="746" y="758" width="1" height="3" fill="#000"/>
<rect x="753" y="758" width="1" height="3" fill="#000"/>
<rect x="758" y="758" width="1" height="5" fill="#000"/>
<text x="758" y="774" text-anchor="middle">1024</text>
<rect x="765" y="758" width="1" height="3" fill="#000"/>
<rect x="772" y="758" width="1" height="3" fill="#000"/>
<rect x="778" y="758" width="1" height="3" fill="#000"/>
<rect x="785" y="758" width="1" height="3" fill="#000"/>
<rect x="792" y="758" width="1" height="3" fill="#000"/>
<rect x="798" y="758" width="1" height="3" fill="#000"/>
<rect x="805" y="758" width="1" height="3" fill="#000"/>
<rect x="812" y="758" width="1" height="3" fill="#000"/>
<rect x="818" y="758" width="1" height="3" fill="#000"/>
<rect x="825" y="758" width="1" height="3" fill="#000"/>
<rect x="832" y="758" width="1" height="3" fill="#000"/>
<rect x="838" y="758" width="1" height="3" fill="#000"/>
<rect x="844" y="758" width="1" height="5" fill="#000"/>
<text x="844" y="774" text-anchor="middle">1152</text>
<rect x="850" y="758" width="1" height="3" fill="#000"/>
<rect x="857" y="758" width="1" height="3" fill="#000"/>
<rect x="864" y="758" width="1" height="3" fill="#000"/>
<rect x="870" y="758" width="1" height="3" fill="#000"/>
<rect x="877" y="758" width="1" height="3" fill="#000"/>
<rect x="884" y="758" width="1" height="3" fill="#000"/>
<rect x="890" y="758" width="1" height="3" fill="#000"/>
<rect x="897" y="758" width="1" height="3" fill="#000"/>
<rect x="904" y="758" width="1" height="3" fill="#000"/>
<rect x="910" y="758" width="1" height="3" fill="#000"/>
<rect x="917" y="758" width="1" height="3" fill="#000"/>
<rect x="924" y="758" width="1" height="3" fill="#000"/>
<rect x="929" y="758" width="1" height="5" fill="#000"/>
<text x="929" y="774" text-anchor="middle">1280</text>
<rect x="68" y="755" width="5" height="1" fill="#000"/>
<text x="65.5" y="759.5" text-anchor="end">0</text>
<rect x="68" y="724" width="5" height="1" fill="#000"/>
<text x="65.5" y="728.5" text-anchor="end">5</text>
<rect x="68" y="693" width="5" height="1" fill="#000"/>
<text x="65.5" y="697.5" text-anchor="end">10</text>
<rect x="68" y="662" width="5" height="1" fill="#000"/>
<text x="65.5" y="666.5" text-anchor="end">15</text>
<rect x="68" y="631" width="5" height="1" fill="#000"/>
<text x="65.5" y="635.5" text-anchor="end">20</text>
<text x="48" y="693.0" text-anchor="middle" transform="rotate(-90 48 693.0)" style="font-size:11px">Output noise (mV) @ 2fC</text>
</svg>
<svg class="a" style="left:34px;top:781px" width="920" height="160" viewBox="34 781 920 160" shape-rendering="crispEdges">
<defs><linearGradient id="g781" x1="0" x2="1"><stop offset="0" stop-color="#d6d6d6"/><stop offset="0.008" stop-color="#cfcfcf"/><stop offset="0.015" stop-color="#c1c1c1"/><stop offset="0.985" stop-color="#c1c1c1"/><stop offset="0.993" stop-color="#9c9c9c"/><stop offset="0.999" stop-color="#6a6a6a"/><stop offset="1" stop-color="#4c4c4c"/></linearGradient></defs>
<rect x="34" y="781" width="920" height="160" fill="url(#g781)"/>
<rect x="34" y="781" width="914" height="2" fill="#d8d8d8"/><rect x="38" y="939" width="916" height="1" fill="#909090"/><rect x="36" y="940" width="918" height="1" fill="#6a6a6a"/>
<rect x="80" y="790" width="851" height="127" fill="#d2d2d2"/>
<rect x="80" y="790" width="850" height="126" fill="#5c5c5c"/>
<rect x="81" y="791" width="849" height="125" fill="#000"/>
<rect x="166" y="791" width="1" height="125" fill="#00ee00"/>
<rect x="251" y="791" width="1" height="125" fill="#00ee00"/>
<rect x="335" y="791" width="1" height="125" fill="#00ee00"/>
<rect x="420" y="791" width="1" height="125" fill="#00ee00"/>
<rect x="505" y="791" width="1" height="125" fill="#00ee00"/>
<rect x="590" y="791" width="1" height="125" fill="#00ee00"/>
<rect x="675" y="791" width="1" height="125" fill="#00ee00"/>
<rect x="759" y="791" width="1" height="125" fill="#00ee00"/>
<rect x="844" y="791" width="1" height="125" fill="#00ee00"/>
<path d="M82 791v89M83 819v61M84 818v21M85 818v12M86 823v7M87 826v4M88 822v5M89 817v10M90 817v9M91 822v7M92 827v2M93 823v5M94 818v8M95 825v7M96 828v5M97 823v10M98 823v8M99 827v4M100 821v7M101 823v6M102 822v7M103 824v5M104 817v12M105 817v14M106 821v10M107 823v4M108 823v2M109 824v3M110 822v4M111 822v11M112 823v10M113 819v5M114 821v4M115 823v12M116 822v2M117 819v12M118 826v5M119 826v3M120 827v7M121 827v7M122 827v1M123 818v11M124 827v2M125 820v9M126 820v9M127 820v9M128 828v2M129 825v5M130 825v2M131 823v6M132 823v7M133 826v4M134 826v6M135 826v6M136 826v7M137 820v15M138 820v8M139 826v3M140 818v11M141 818v17M142 823v12M143 823v8M144 824v3M145 820v7M146 823v5M147 813v15M148 813v16M149 821v8M150 823v2M151 823v9M152 819v12M153 819v10M154 817v12M155 817v6M156 822v9M157 819v12M158 819v17M159 829v7M160 821v9M161 821v4M162 823v3M163 820v6M164 809v15M165 819v5M166 819v10M167 819v8M168 825v4M169 828v3M170 829v3M171 831v2M172 818v15M173 822v3M174 822v12M175 826v8M176 826v5M177 827v4M178 826v2M179 826v1M180 826v3M181 821v6M182 816v6M183 821v7M184 822v6M185 822v1M186 821v2M187 821v4M188 824v10M189 821v13M190 821v10M191 826v5M192 826v3M193 818v11M194 815v14M195 815v13M196 826v5M197 815v12M198 815v13M199 824v14M200 824v14M201 827v7M202 820v9M203 823v6M204 823v6M205 825v4M206 821v6M207 826v1M208 826v9M209 826v9M210 825v3M211 822v4M212 822v9M213 825v6M214 825v4M215 828v10M216 827v4M217 823v6M218 828v6M219 820v14M220 827v3M221 823v7M222 823v5M223 827v3M224 823v7M225 823v5M226 824v12M227 828v8M228 828v2M229 829v7M230 819v11M231 819v11M232 829v2M233 825v9M234 825v6M235 822v9M236 822v1M237 822v13M238 829v6M239 821v12M240 821v12M241 821v7M242 822v7M243 828v5M244 820v12M245 820v13M246 823v10M247 823v12M248 825v3M249 825v1M250 825v3M251 791v96M252 886v1M253 824v63M254 822v3M255 819v7M256 816v4M257 816v13M258 828v5M259 823v12M260 818v17M261 818v11M262 823v6M263 823v9M264 822v10M265 822v10M266 825v3M267 819v9M268 819v6M269 822v9M270 830v7M271 826v11M272 826v14M273 830v8M274 823v15M275 823v8M276 828v3M277 825v4M278 825v9M279 825v2M280 826v6M281 820v12M282 820v5M283 824v7M284 828v5M285 832v3M286 828v7M287 829v4M288 824v9M289 824v5M290 817v17M291 817v18M292 825v10M293 823v9M294 821v6M295 821v6M296 819v12M297 819v8M298 826v2M299 827v3M300 818v12M301 818v2M302 819v7M303 823v1M304 819v11M305 819v7M306 823v13M307 823v8M308 823v8M309 823v6M310 820v9M311 820v13M312 827v9M313 827v1M314 816v12M315 821v4M316 824v12M317 832v4M318 825v8M319 825v4M320 823v6M321 823v7M322 828v4M323 821v16M324 823v14M325 823v14M326 828v9M327 821v10M328 829v2M329 820v10M330 820v4M331 823v11M332 833v1M333 825v12M334 829v8M335 823v9M336 827v5M337 822v6M338 822v11M339 825v8M340 825v2M341 823v11M342 823v8M343 826v5M344 817v14M345 816v10M346 816v14M347 819v11M348 819v9M349 820v8M350 820v8M351 827v3M352 821v7M353 820v5M354 820v8M355 827v5M356 827v5M357 826v3M358 826v5M359 827v4M360 821v7M361 821v8M362 821v8M363 819v9M364 827v1M365 827v8M366 826v8M367 817v10M368 817v6M369 822v7M370 823v10M371 826v7M372 826v6M373 815v12M374 815v11M375 824v10M376 818v16M377 818v3M378 820v4M379 818v6M380 818v10M381 813v14M382 813v18M383 823v5M384 819v9M385 827v1M386 822v6M387 822v9M388 826v7M389 826v2M390 823v5M391 827v2M392 824v5M393 821v4M394 821v14M395 826v9M396 826v1M397 823v4M398 820v8M399 820v8M400 819v13M401 831v6M402 812v25M403 812v16M404 824v4M405 824v5M406 824v5M407 816v10M408 816v9M409 822v3M410 822v9M411 820v11M412 820v9M413 822v4M414 819v7M415 819v5M416 823v6M417 823v5M418 823v5M419 826v2M420 821v7M421 821v6M422 823v5M423 827v6M424 819v14M425 819v8M426 820v7M427 818v12M428 818v16M429 820v14M430 820v10M431 816v14M432 818v10M433 818v8M434 821v4M435 813v12M436 819v4M437 819v5M438 823v3M439 819v7M440 819v1M441 819v6M442 820v5M443 820v9M444 824v10M445 824v10M446 824v7M447 819v12M448 819v3M449 818v4M450 818v4M451 820v3M452 818v5M453 818v14M454 819v6M455 819v5M456 823v3M457 820v6M458 824v6M459 818v12M460 823v3M461 823v13M462 821v15M463 816v19M464 826v9M465 821v6M466 823v1M467 823v6M468 818v11M469 818v5M470 822v13M471 816v19M472 821v4M473 815v7M474 817v8M475 818v7M476 821v6M477 823v10M478 831v2M479 817v15M480 817v12M481 818v6M482 815v11M483 810v16M484 810v16M485 822v4M486 822v11M487 822v4M488 821v5M489 825v12M490 827v10M491 827v3M492 819v11M493 821v9M494 816v9M495 816v8M496 823v6M497 822v7M498 820v5M499 820v5M500 820v9M501 822v4M502 818v8M503 818v4M504 821v8M505 828v88M506 915v1M507 915v1M508 915v1M509 915v1M510 915v1M511 915v1M512 915v1M513 915v1M514 915v1M515 915v1M516 915v1M517 915v1M518 915v1M519 915v1M520 915v1M521 915v1M522 915v1M523 915v1M524 915v1M525 915v1M526 915v1M527 915v1M528 915v1M529 915v1M530 915v1M531 915v1M532 915v1M533 915v1M534 915v1M535 915v1M536 915v1M537 915v1M538 915v1M539 915v1M540 915v1M541 915v1M542 915v1M543 915v1M544 915v1M545 915v1M546 915v1M547 915v1M548 915v1M549 915v1M550 915v1M551 915v1M552 915v1M553 915v1M554 915v1M555 915v1M556 915v1M557 915v1M558 915v1M559 915v1M560 915v1M561 915v1M562 915v1M563 915v1M564 915v1M565 915v1M566 915v1M567 915v1M568 915v1M569 915v1M570 915v1M571 915v1M572 915v1M573 915v1M574 915v1M575 915v1M576 915v1M577 915v1M578 915v1M579 915v1M580 915v1M581 915v1M582 915v1M583 915v1M584 915v1M585 915v1M586 915v1M587 915v1M588 915v1M589 915v1M590 824v92M591 824v5M592 819v10M593 819v11M594 820v10M595 819v3M596 818v16M597 818v11M598 824v5M599 825v3M600 826v2M601 822v5M602 819v6M603 819v6M604 817v6M605 817v13M606 822v8M607 822v2M608 819v4M609 819v4M610 820v5M611 823v2M612 818v9M613 818v2M614 817v9M615 824v2M616 811v14M617 818v12M618 819v11M619 821v4M620 824v4M621 825v3M622 825v4M623 824v5M624 819v9M625 818v2M626 818v7M627 820v5M628 813v11M629 813v23M630 828v8M631 820v9M632 819v7M633 823v3M634 820v5M635 813v8M636 812v22M637 812v7M638 818v7M639 820v4M640 820v1M641 819v9M642 820v8M643 820v7M644 819v6M645 819v7M646 821v1M647 821v8M648 820v9M649 812v11M650 812v16M651 818v10M652 824v2M653 815v10M654 819v5M655 819v9M656 824v4M657 824v2M658 814v11M659 814v18M660 814v18M661 814v8M662 815v4M663 815v12M664 821v3M665 823v2M666 822v3M667 817v6M668 819v3M669 817v17M670 822v12M671 821v2M672 816v6M673 816v7M674 816v8M675 823v6M676 828v2M677 825v5M678 825v8M679 824v9M680 828v2M681 828v47M682 791v84M683 791v42M684 830v3M685 829v6M686 828v7M687 828v7M688 824v6M689 821v4M690 821v9M691 826v8M692 821v12M693 822v11M694 822v19M695 828v13M696 819v10M697 823v3M698 823v14M699 836v4M700 830v10M701 830v4M702 825v9M703 821v5M704 821v16M705 829v5M706 829v11M707 814v26M708 814v13M709 826v12M710 827v11M711 826v9M712 826v3M713 826v3M714 826v6M715 827v13M716 825v15M717 816v14M718 816v24M719 821v19M720 821v13M721 828v6M722 819v10M723 819v12M724 827v4M725 827v5M726 829v3M727 828v2M728 823v15M729 826v12M730 822v5M731 822v9M732 828v3M733 828v4M734 831v1M735 831v1M736 831v3M737 831v2M738 832v3M739 824v11M740 824v5M741 828v6M742 825v9M743 829v1M744 828v2M745 824v9M746 831v2M747 828v4M748 826v4M749 822v5M750 822v3M751 824v7M752 829v2M753 823v8M754 829v4M755 825v9M756 825v8M757 825v17M758 825v3M759 823v5M760 823v3M761 825v3M762 827v5M763 831v8M764 826v12M765 824v5M766 828v4M767 825v7M768 828v1M769 828v6M770 832v2M771 820v13M772 820v1M773 820v10M774 826v3M775 826v3M776 823v4M777 819v15M778 819v10M779 817v16M780 817v16M781 828v5M782 822v10M783 822v19M784 826v10M785 818v18M786 818v7M787 822v10M788 817v6M789 817v13M790 821v9M791 821v14M792 828v2M793 823v6M794 823v6M795 828v7M796 828v7M797 823v6M798 823v12M799 825v10M800 822v10M801 822v8M802 829v2M803 823v8M804 815v14M805 815v8M806 822v12M807 823v6M808 823v3M809 825v2M810 826v10M811 824v12M812 824v8M813 825v4M814 825v12M815 825v12M816 825v6M817 822v8M818 822v8M819 826v3M820 820v17M821 820v7M822 822v9M823 822v11M824 831v3M825 829v5M826 826v6M827 826v6M828 826v6M829 826v1M830 826v2M831 827v6M832 826v12M833 826v9M834 826v9M835 828v1M836 825v4M837 825v8M838 823v10M839 823v2M840 823v7M841 828v2M842 819v10M843 825v3M844 823v36M845 828v31M846 825v4M847 820v8M848 820v6M849 823v9M850 827v5M851 825v3M852 825v3M853 817v11M854 817v11M855 821v10M856 820v2M857 820v7M858 822v15M859 825v12M860 817v12M861 817v10M862 818v11M863 828v2M864 829v4M865 822v11M866 822v13M867 822v13M868 822v5M869 824v3M870 824v2M871 820v17M872 820v6M873 825v5M874 827v2M875 824v9M876 832v2M877 823v11M878 823v9M879 826v7M880 827v6M881 827v4M882 822v9M883 822v10M884 816v16M885 816v17M886 832v4M887 819v17M888 825v2M889 822v5M890 823v4M891 819v8M892 823v4M893 823v4M894 820v7M895 820v6M896 825v11M897 830v6M898 827v4M899 825v3M900 826v2M901 825v3M902 823v3M903 822v14M904 818v5M905 821v9M906 827v5M907 821v7M908 821v16M909 836v7M910 816v27M911 816v19M912 827v8M913 825v3M914 823v12M915 826v9M916 823v8M917 823v3M918 822v12M919 832v2M920 829v4M921 829v2M922 830v4M923 830v6M924 822v14M925 829v5M926 826v10M927 825v11M928 819v11" fill="none" stroke="#f00" stroke-width="1" transform="translate(.5 0)"/>
<rect x="81" y="918" width="1" height="5" fill="#000"/>
<text x="81" y="934" text-anchor="middle">0</text>
<rect x="88" y="918" width="1" height="3" fill="#000"/>
<rect x="94" y="918" width="1" height="3" fill="#000"/>
<rect x="101" y="918" width="1" height="3" fill="#000"/>
<rect x="108" y="918" width="1" height="3" fill="#000"/>
<rect x="114" y="918" width="1" height="3" fill="#000"/>
<rect x="121" y="918" width="1" height="3" fill="#000"/>
<rect x="127" y="918" width="1" height="3" fill="#000"/>
<rect x="134" y="918" width="1" height="3" fill="#000"/>
<rect x="141" y="918" width="1" height="3" fill="#000"/>
<rect x="147" y="918" width="1" height="3" fill="#000"/>
<rect x="154" y="918" width="1" height="3" fill="#000"/>
<rect x="160" y="918" width="1" height="3" fill="#000"/>
<rect x="166" y="918" width="1" height="5" fill="#000"/>
<text x="166" y="934" text-anchor="middle">128</text>
<rect x="172" y="918" width="1" height="3" fill="#000"/>
<rect x="179" y="918" width="1" height="3" fill="#000"/>
<rect x="186" y="918" width="1" height="3" fill="#000"/>
<rect x="192" y="918" width="1" height="3" fill="#000"/>
<rect x="199" y="918" width="1" height="3" fill="#000"/>
<rect x="206" y="918" width="1" height="3" fill="#000"/>
<rect x="212" y="918" width="1" height="3" fill="#000"/>
<rect x="219" y="918" width="1" height="3" fill="#000"/>
<rect x="225" y="918" width="1" height="3" fill="#000"/>
<rect x="232" y="918" width="1" height="3" fill="#000"/>
<rect x="239" y="918" width="1" height="3" fill="#000"/>
<rect x="245" y="918" width="1" height="3" fill="#000"/>
<rect x="251" y="918" width="1" height="5" fill="#000"/>
<text x="251" y="934" text-anchor="middle">256</text>
<rect x="257" y="918" width="1" height="3" fill="#000"/>
<rect x="264" y="918" width="1" height="3" fill="#000"/>
<rect x="270" y="918" width="1" height="3" fill="#000"/>
<rect x="277" y="918" width="1" height="3" fill="#000"/>
<rect x="284" y="918" width="1" height="3" fill="#000"/>
<rect x="290" y="918" width="1" height="3" fill="#000"/>
<rect x="297" y="918" width="1" height="3" fill="#000"/>
<rect x="304" y="918" width="1" height="3" fill="#000"/>
<rect x="310" y="918" width="1" height="3" fill="#000"/>
<rect x="317" y="918" width="1" height="3" fill="#000"/>
<rect x="323" y="918" width="1" height="3" fill="#000"/>
<rect x="330" y="918" width="1" height="3" fill="#000"/>
<rect x="335" y="918" width="1" height="5" fill="#000"/>
<text x="335" y="934" text-anchor="middle">384</text>
<rect x="342" y="918" width="1" height="3" fill="#000"/>
<rect x="349" y="918" width="1" height="3" fill="#000"/>
<rect x="355" y="918" width="1" height="3" fill="#000"/>
<rect x="362" y="918" width="1" height="3" fill="#000"/>
<rect x="369" y="918" width="1" height="3" fill="#000"/>
<rect x="375" y="918" width="1" height="3" fill="#000"/>
<rect x="382" y="918" width="1" height="3" fill="#000"/>
<rect x="388" y="918" width="1" height="3" fill="#000"/>
<rect x="395" y="918" width="1" height="3" fill="#000"/>
<rect x="402" y="918" width="1" height="3" fill="#000"/>
<rect x="408" y="918" width="1" height="3" fill="#000"/>
<rect x="415" y="918" width="1" height="3" fill="#000"/>
<rect x="420" y="918" width="1" height="5" fill="#000"/>
<text x="420" y="934" text-anchor="middle">512</text>
<rect x="427" y="918" width="1" height="3" fill="#000"/>
<rect x="433" y="918" width="1" height="3" fill="#000"/>
<rect x="440" y="918" width="1" height="3" fill="#000"/>
<rect x="447" y="918" width="1" height="3" fill="#000"/>
<rect x="453" y="918" width="1" height="3" fill="#000"/>
<rect x="460" y="918" width="1" height="3" fill="#000"/>
<rect x="467" y="918" width="1" height="3" fill="#000"/>
<rect x="473" y="918" width="1" height="3" fill="#000"/>
<rect x="480" y="918" width="1" height="3" fill="#000"/>
<rect x="486" y="918" width="1" height="3" fill="#000"/>
<rect x="493" y="918" width="1" height="3" fill="#000"/>
<rect x="500" y="918" width="1" height="3" fill="#000"/>
<rect x="505" y="918" width="1" height="5" fill="#000"/>
<text x="505" y="934" text-anchor="middle">640</text>
<rect x="512" y="918" width="1" height="3" fill="#000"/>
<rect x="518" y="918" width="1" height="3" fill="#000"/>
<rect x="525" y="918" width="1" height="3" fill="#000"/>
<rect x="532" y="918" width="1" height="3" fill="#000"/>
<rect x="538" y="918" width="1" height="3" fill="#000"/>
<rect x="545" y="918" width="1" height="3" fill="#000"/>
<rect x="551" y="918" width="1" height="3" fill="#000"/>
<rect x="558" y="918" width="1" height="3" fill="#000"/>
<rect x="565" y="918" width="1" height="3" fill="#000"/>
<rect x="571" y="918" width="1" height="3" fill="#000"/>
<rect x="578" y="918" width="1" height="3" fill="#000"/>
<rect x="584" y="918" width="1" height="3" fill="#000"/>
<rect x="590" y="918" width="1" height="5" fill="#000"/>
<text x="590" y="934" text-anchor="middle">768</text>
<rect x="596" y="918" width="1" height="3" fill="#000"/>
<rect x="603" y="918" width="1" height="3" fill="#000"/>
<rect x="610" y="918" width="1" height="3" fill="#000"/>
<rect x="616" y="918" width="1" height="3" fill="#000"/>
<rect x="623" y="918" width="1" height="3" fill="#000"/>
<rect x="630" y="918" width="1" height="3" fill="#000"/>
<rect x="636" y="918" width="1" height="3" fill="#000"/>
<rect x="643" y="918" width="1" height="3" fill="#000"/>
<rect x="649" y="918" width="1" height="3" fill="#000"/>
<rect x="656" y="918" width="1" height="3" fill="#000"/>
<rect x="663" y="918" width="1" height="3" fill="#000"/>
<rect x="669" y="918" width="1" height="3" fill="#000"/>
<rect x="675" y="918" width="1" height="5" fill="#000"/>
<text x="675" y="934" text-anchor="middle">896</text>
<rect x="681" y="918" width="1" height="3" fill="#000"/>
<rect x="688" y="918" width="1" height="3" fill="#000"/>
<rect x="694" y="918" width="1" height="3" fill="#000"/>
<rect x="701" y="918" width="1" height="3" fill="#000"/>
<rect x="708" y="918" width="1" height="3" fill="#000"/>
<rect x="714" y="918" width="1" height="3" fill="#000"/>
<rect x="721" y="918" width="1" height="3" fill="#000"/>
<rect x="728" y="918" width="1" height="3" fill="#000"/>
<rect x="734" y="918" width="1" height="3" fill="#000"/>
<rect x="741" y="918" width="1" height="3" fill="#000"/>
<rect x="747" y="918" width="1" height="3" fill="#000"/>
<rect x="754" y="918" width="1" height="3" fill="#000"/>
<rect x="759" y="918" width="1" height="5" fill="#000"/>
<text x="759" y="934" text-anchor="middle">1024</text>
<rect x="766" y="918" width="1" height="3" fill="#000"/>
<rect x="773" y="918" width="1" height="3" fill="#000"/>
<rect x="779" y="918" width="1" height="3" fill="#000"/>
<rect x="786" y="918" width="1" height="3" fill="#000"/>
<rect x="793" y="918" width="1" height="3" fill="#000"/>
<rect x="799" y="918" width="1" height="3" fill="#000"/>
<rect x="806" y="918" width="1" height="3" fill="#000"/>
<rect x="812" y="918" width="1" height="3" fill="#000"/>
<rect x="819" y="918" width="1" height="3" fill="#000"/>
<rect x="826" y="918" width="1" height="3" fill="#000"/>
<rect x="832" y="918" width="1" height="3" fill="#000"/>
<rect x="839" y="918" width="1" height="3" fill="#000"/>
<rect x="844" y="918" width="1" height="5" fill="#000"/>
<text x="844" y="934" text-anchor="middle">1152</text>
<rect x="851" y="918" width="1" height="3" fill="#000"/>
<rect x="857" y="918" width="1" height="3" fill="#000"/>
<rect x="864" y="918" width="1" height="3" fill="#000"/>
<rect x="871" y="918" width="1" height="3" fill="#000"/>
<rect x="877" y="918" width="1" height="3" fill="#000"/>
<rect x="884" y="918" width="1" height="3" fill="#000"/>
<rect x="891" y="918" width="1" height="3" fill="#000"/>
<rect x="897" y="918" width="1" height="3" fill="#000"/>
<rect x="904" y="918" width="1" height="3" fill="#000"/>
<rect x="910" y="918" width="1" height="3" fill="#000"/>
<rect x="917" y="918" width="1" height="3" fill="#000"/>
<rect x="924" y="918" width="1" height="3" fill="#000"/>
<rect x="929" y="918" width="1" height="5" fill="#000"/>
<text x="929" y="934" text-anchor="middle">1280</text>
<rect x="74" y="915" width="5" height="1" fill="#000"/>
<text x="71.5" y="919.5" text-anchor="end">0</text>
<rect x="74" y="884" width="5" height="1" fill="#000"/>
<text x="71.5" y="888.5" text-anchor="end">200</text>
<rect x="74" y="853" width="5" height="1" fill="#000"/>
<text x="71.5" y="857.5" text-anchor="end">400</text>
<rect x="74" y="822" width="5" height="1" fill="#000"/>
<text x="71.5" y="826.5" text-anchor="end">600</text>
<rect x="74" y="791" width="5" height="1" fill="#000"/>
<text x="71.5" y="795.5" text-anchor="end">800</text>
<text x="48" y="853.0" text-anchor="middle" transform="rotate(-90 48 853.0)" style="font-size:11px">Input noise (ENC) @ 2fC</text>
</svg>
<div class="a" style="left:1028px;top:78px;width:17px;height:913px;background:linear-gradient(90deg,#ecebe2,#f6f5ef 4px,#fefefb 12px,#fbfaf5)"></div>
<div class="a" style="left:1045px;top:30px;width:2px;height:974px;background:#efede0"></div>
<div class="a" style="left:1030px;top:247px;width:13px;height:574px;background:linear-gradient(90deg,#b9c9f8,#c9d7fb 1.5px,#c6d5fc 50%,#b7cbf8);border-radius:2px;box-shadow:0 0 0 1px #fff,1px 1px 0 1px #9fb3d8"></div>
<div class="a" style="left:1033px;top:530px;width:6px;height:1px;background:#f4f7ff"></div><div class="a" style="left:1034px;top:531px;width:6px;height:1px;background:#8cabf0"></div>
<div class="a" style="left:1033px;top:532px;width:6px;height:1px;background:#f4f7ff"></div><div class="a" style="left:1034px;top:533px;width:6px;height:1px;background:#8cabf0"></div>
<div class="a" style="left:1033px;top:534px;width:6px;height:1px;background:#f4f7ff"></div><div class="a" style="left:1034px;top:535px;width:6px;height:1px;background:#8cabf0"></div>
<div class="a" style="left:1033px;top:536px;width:6px;height:1px;background:#f4f7ff"></div><div class="a" style="left:1034px;top:537px;width:6px;height:1px;background:#8cabf0"></div>
<div class="a" style="left:1029px;top:78px;width:16px;height:16px;background:linear-gradient(135deg,#d4dffe,#c0d0fb 50%,#acc0f4);border:1px solid #fff;border-radius:3px;box-shadow:inset -1px -1px 0 #95aeea"></div>
<svg class="a" style="left:1028px;top:77px" width="18" height="18" viewBox="1028 77 18 18"><path d="M1033 88L1037 84L1041 88" fill="none" stroke="#4d6185" stroke-width="2.2"/></svg>
<div class="a" style="left:1029px;top:974px;width:16px;height:16px;background:linear-gradient(135deg,#d4dffe,#c0d0fb 50%,#acc0f4);border:1px solid #fff;border-radius:3px;box-shadow:inset -1px -1px 0 #95aeea"></div>
<svg class="a" style="left:1028px;top:973px" width="18" height="18" viewBox="1028 973 18 18"><path d="M1033 981L1037 985L1041 981" fill="none" stroke="#4d6185" stroke-width="2.2"/></svg>
<div class="a" style="left:5px;top:991px;width:1023px;height:13px;background:linear-gradient(#ecebe2,#f6f5ef 4px,#fefefb 12px)"></div>
<div class="a" style="left:193px;top:993px;width:676px;height:13px;background:linear-gradient(#b9c9f8,#c9d7fb 1.5px,#c6d5fc 50%,#b7cbf8);border-radius:2px;box-shadow:0 0 0 1px #fff,1px 1px 0 1px #9fb3d8"></div>
<div class="a" style="left:527px;top:996px;width:1px;height:6px;background:#f4f7ff"></div><div class="a" style="left:528px;top:997px;width:1px;height:6px;background:#8cabf0"></div>
<div class="a" style="left:529px;top:996px;width:1px;height:6px;background:#f4f7ff"></div><div class="a" style="left:530px;top:997px;width:1px;height:6px;background:#8cabf0"></div>
<div class="a" style="left:531px;top:996px;width:1px;height:6px;background:#f4f7ff"></div><div class="a" style="left:532px;top:997px;width:1px;height:6px;background:#8cabf0"></div>
<div class="a" style="left:533px;top:996px;width:1px;height:6px;background:#f4f7ff"></div><div class="a" style="left:534px;top:997px;width:1px;height:6px;background:#8cabf0"></div>
<div class="a" style="left:6px;top:992px;width:16px;height:16px;background:linear-gradient(135deg,#d4dffe,#c0d0fb 50%,#acc0f4);border:1px solid #fff;border-radius:3px;box-shadow:inset -1px -1px 0 #95aeea"></div>
<svg class="a" style="left:5px;top:991px" width="18" height="18" viewBox="5 991 18 18"><path d="M15 996L11 1000L15 1004" fill="none" stroke="#4d6185" stroke-width="2.2"/></svg>
<div class="a" style="left:1011px;top:992px;width:16px;height:16px;background:linear-gradient(135deg,#d4dffe,#c0d0fb 50%,#acc0f4);border:1px solid #fff;border-radius:3px;box-shadow:inset -1px -1px 0 #95aeea"></div>
<svg class="a" style="left:1010px;top:991px" width="18" height="18" viewBox="1010 991 18 18"><path d="M1018 996L1022 1000L1018 1004" fill="none" stroke="#4d6185" stroke-width="2.2"/></svg>
<div class="a" style="left:1028px;top:991px;width:19px;height:13px;background:#ece9d8"></div>
<div class="a" style="left:1041px;top:996px;width:2px;height:2px;background:#b8b4a2;box-shadow:1px 1px 0 #fff"></div>
<div class="a" style="left:1037px;top:1000px;width:2px;height:2px;background:#b8b4a2;box-shadow:1px 1px 0 #fff"></div>
<div class="a" style="left:1041px;top:1000px;width:2px;height:2px;background:#b8b4a2;box-shadow:1px 1px 0 #fff"></div>
<div id="menu" class="a"></div>
<div class="a" style="left:4px;top:30px;width:1043px;height:1px;background:#aaa48c"></div><div class="a" style="left:4px;top:31px;width:1043px;height:1px;background:#77735f"></div>
<div class="a" style="left:4px;top:52px;width:1006px;height:1px;background:#aca899"></div><div class="a" style="left:4px;top:53px;width:1006px;height:1px;background:#fff"></div>
<div class="a" style="left:5px;top:77px;width:1040px;height:1px;background:#2a2a2a"></div>
<div class="a" style="left:1010px;top:31px;width:1px;height:46px;background:#aca899"></div>
<div class="mi" style="left:11px"><u>F</u>ile</div>
<div class="mi" style="left:39px"><u>E</u>dit</div>
<div class="mi" style="left:69px"><u>V</u>iew</div>
<div class="mi" style="left:103px"><u>P</u>roject</div>
<div class="mi" style="left:149px"><u>O</u>perate</div>
<div class="mi" style="left:201px"><u>T</u>ools</div>
<div class="mi" style="left:238px"><u>W</u>indow</div>
<div class="mi" style="left:288px"><u>H</u>elp</div>
<div class="a" style="left:57px;top:55px;width:22px;height:21px;border:1px solid #d6d2c2;background:#ebe8d7"></div>
<svg class="a" style="left:60px;top:58px" width="18" height="15" viewBox="60 58 18 15"><path d="M64 61.6H68.4V58.6L76.4 65.5L68.4 72.4V69.4H64Z" fill="#000"/><path d="M66 64.6H70.4V62.9L73.4 65.5L70.4 68.1V66.4H66Z" fill="#fff"/><path d="M61.5 62.5v6.5M63.5 60v11.5" stroke="#000" stroke-width="1" stroke-dasharray="1 1"/></svg>
<div class="a" style="left:104px;top:55px;width:22px;height:21px;background:linear-gradient(135deg,#f6f4ea 0,#ece9d8 45%,#d4d0be 100%);border:1px solid #3c3c3c;box-shadow:inset 1px 1px 0 #fff,inset -1px -1px 0 #a8a493"></div>
<div class="a" style="left:125px;top:55px;width:22px;height:21px;background:linear-gradient(135deg,#f6f4ea 0,#ece9d8 45%,#d4d0be 100%);border:1px solid #3c3c3c;box-shadow:inset 1px 1px 0 #fff,inset -1px -1px 0 #a8a493"></div>
<svg class="a" style="left:106px;top:57px" width="18" height="18" viewBox="0 0 18 18"><path d="M5.5 1.5h6l4 4v6l-4 4h-6l-4-4v-6z" fill="#d8d8d8" stroke="#000" stroke-width="1.2"/><path d="M6.5 4h4l3 3v4l-3 3h-4l-3-3V7z" fill="#e00000" stroke="#300" stroke-width="1"/></svg>
<div class="a" style="left:131px;top:60px;width:4px;height:10px;background:#000"></div><div class="a" style="left:137px;top:60px;width:4px;height:10px;background:#000"></div>
<div class="a" style="left:986px;top:55px;width:22px;height:21px;background:linear-gradient(135deg,#f4f2e8,#ece9d8 50%,#d8d4c2);border:1px solid;border-color:#9a9786 #444 #444 #9a9786;box-shadow:inset 1px 1px 0 #fff,inset -1px -1px 0 #aca899"></div>
<div class="t" style="left:992px;top:58px;font-size:17px;font-weight:bold;color:#f0e878;text-shadow:-1px 0 #000,1px 0 #000,0 1px #000,0 -1px #000">?</div>
<div class="a" style="left:1012px;top:38px;width:32px;height:32px;background:#fff;border:1px solid #000"></div>
<div class="a" style="left:1013px;top:39px;width:30px;height:10px;background:#a0f96e;border-bottom:1px solid #000;font-size:8px;line-height:9px;text-align:center;font-weight:bold;letter-spacing:-.1px">Analog</div>
<svg class="a" style="left:1013px;top:49px" width="30" height="20" viewBox="1013 49 30 20"><path d="M1015.5 51v15.5h18" fill="none" stroke="#000" stroke-width="1"/><path d="M1014 53l1.5-2.5l1.5 2.5M1032 65l2.5 1.5l-2.5 1.5" fill="none" stroke="#000" stroke-width="1"/><path d="M1016 65.5L1032 50.5" stroke="#000" stroke-width="1"/><path d="M1018.5 62.5h2.4M1023 57.5h2.4M1027.3 52.8h2.4" stroke="#f00000" stroke-width="1.8"/></svg>
<div class="t" style="left:1030px;top:55px;font-size:8px;letter-spacing:.2px">RC</div>
<div class="a" style="left:0;top:0;width:10px;height:10px;background:#000"></div><div class="a" style="left:1041px;top:0;width:10px;height:10px;background:#000"></div><div id="title" class="a"></div><div id="lb" class="a"></div><div id="rb" class="a"></div>
<div class="a" style="left:4px;top:78px;width:1px;height:926px;background:#857f66"></div><div class="a" style="left:5px;top:78px;width:1px;height:926px;background:#e4e2d6"></div>
<svg class="a" style="left:5px;top:7px" width="19" height="16" viewBox="0 0 19 16" shape-rendering="crispEdges"><rect x="3" y="1" width="13" height="14" fill="#5e5e5e"/><rect x="4" y="4" width="11" height="8" fill="#0c2a0c"/><path d="M9 4h5v3h-2zM10 10h4v2h-5z" fill="#1fa01f"/><path d="M5 4.2L12.5 8L5 11.8Z" fill="#ffe400" shape-rendering="geometricPrecision"/><rect x="7" y="7" width="2" height="2" fill="#333"/><path d="M4 2.5h11M4 13.5h11" stroke="#e8e8e8" stroke-width="1" stroke-dasharray="1 1"/><path d="M1 6.5h4" stroke="#f00"/><path d="M1 10.5h3" stroke="#22f"/><path d="M12 8.5h6" stroke="#f00"/></svg>
<div class="t" style="left:25px;top:11px;font-size:13px;font-weight:bold;color:#fff;text-shadow:1px 1px 0 #0a1883">RC_Main.vi</div>
<div class="wb" style="left:978px;background:linear-gradient(135deg,#3c81f3,#2363e4 40%,#1a4fcf)"></div><div class="a" style="left:984px;top:19px;width:7px;height:3px;background:#fff"></div>
<div class="wb" style="left:1001px;background:linear-gradient(135deg,#3c81f3,#2363e4 40%,#1a4fcf)"></div><div class="a" style="left:1006px;top:11px;width:11px;height:11px;border:1px solid #fff;border-top:3px solid #fff"></div>
<div class="wb" style="left:1024px;background:linear-gradient(135deg,#e9856a,#d9482a 40%,#c2341b)"></div>
<svg class="a" style="left:1028px;top:10px" width="13" height="13" viewBox="0 0 13 13"><path d="M1.5 1.5l10 10M11.5 1.5l-10 10" stroke="#fff" stroke-width="2.2"/></svg>
</body></html>
